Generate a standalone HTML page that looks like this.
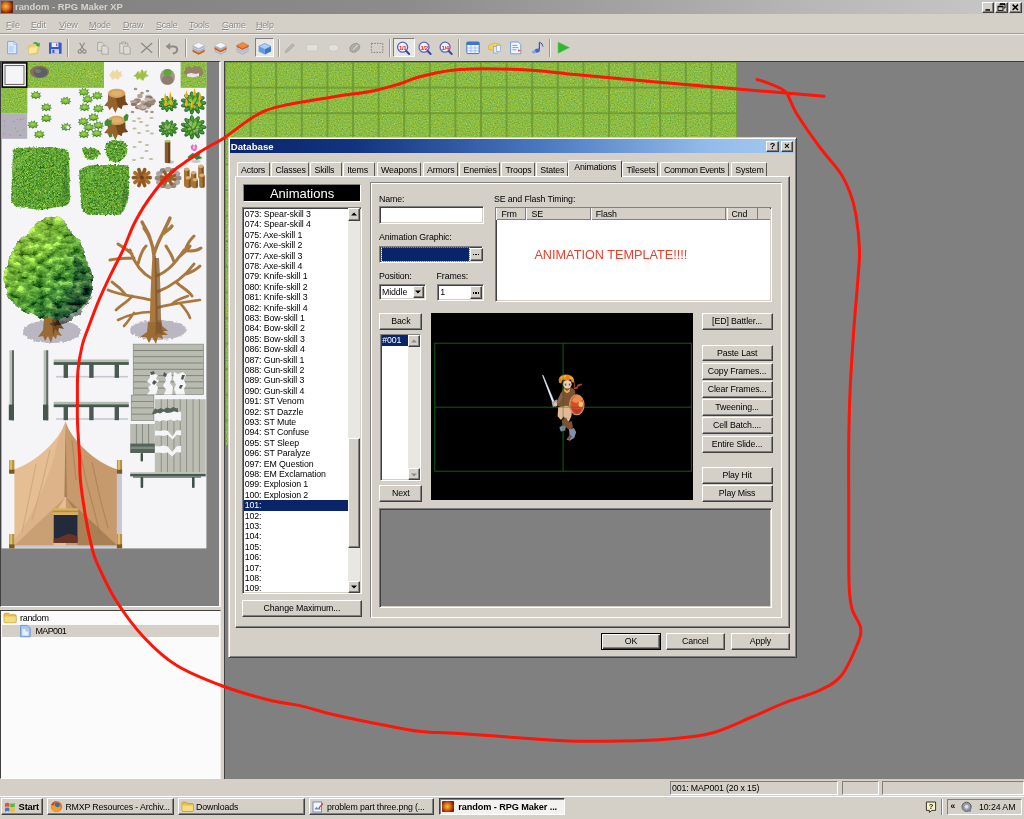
<!DOCTYPE html>
<html lang="en">
<head>
<meta charset="utf-8">
<title>random - RPG Maker XP</title>
<style>
*{box-sizing:border-box;margin:0;padding:0}
html,body{width:1024px;height:819px;overflow:hidden;background:#d4d0c8}
body{font-family:"Liberation Sans",sans-serif;font-size:9px;color:#000;position:relative;line-height:1}
.abs{position:absolute}
#screen{position:absolute;left:0;top:0;width:1024px;height:819px;overflow:hidden;background:#d4d0c8;filter:blur(0.45px)}
/* ---------- main window chrome ---------- */
#titlebar{left:0;top:0;width:1024px;height:14px;background:linear-gradient(90deg,#808080 0%,#8c8c8c 40%,#b8b8b8 80%,#c8c8c8 100%)}
#titlebar .ttl{left:15px;top:1px;font-weight:bold;font-size:9.4px;color:#d8d4cc;letter-spacing:0;white-space:nowrap;line-height:12px}
#appicon{left:1px;top:1px;width:12px;height:12px;background:radial-gradient(circle at 40% 45%,#f6c040 0,#e07018 35%,#7a2408 70%,#3a1404 100%);border-radius:1px}
.capbtn{top:1.6px;width:13px;height:11px;background:#d4d0c8;border:1px solid;border-color:#fff #404040 #404040 #fff;box-shadow:inset -1px -1px 0 #808080;font-size:8px;font-weight:bold;line-height:8px;text-align:center;color:#000}
#menubar{left:0;top:14px;width:1024px;height:19px;background:#d4d0c8}
#menubar span{position:absolute;top:5.6px;letter-spacing:-0.2px;color:#8c8a85;font-size:9px;white-space:nowrap;line-height:11px;text-shadow:0.5px 0.5px 0 #fff}
#menubar u{text-decoration-thickness:0.8px;text-underline-offset:1px}
#tbsep{left:0;top:33px;width:1024px;height:2px;border-top:1px solid #a29f97;border-bottom:1px solid #f0eee8}
#toolbar{left:0;top:35px;width:1024px;height:26px;background:#d4d0c8}
.tsep{top:39px;width:2px;height:18px;border-left:1px solid #9a978f;border-right:1px solid #f4f2ec}
/* ---------- generic 3d ---------- */
.sunk{border:1px solid;border-color:#808080 #fff #fff #808080;box-shadow:inset 1px 1px 0 #404040,inset -1px -1px 0 #d4d0c8}
.btn{background:#d4d0c8;border:1px solid;border-color:#fff #404040 #404040 #fff;box-shadow:inset -1px -1px 0 #808080;text-align:center;white-space:nowrap;font-size:9px;color:#000}
.lbl{white-space:nowrap;font-size:9px;line-height:11px;color:#000}
</style>
</head>
<body>
<div id="screen">

<!-- ================= TITLE BAR ================= -->
<div id="titlebar" class="abs">
  <div id="appicon" class="abs"></div>
  <div class="ttl abs">random - RPG Maker XP</div>
  <div class="capbtn abs" style="left:982.2px;width:12px"><svg width="10" height="9" viewBox="0 0 10 9" style="position:absolute;left:0;top:0"><rect x="2.400" y="6.200" width="4.600" height="1.500" fill="#000"/></svg></div>
  <div class="capbtn abs" style="left:994.6px;width:13px"><svg width="11" height="9" viewBox="0 0 11 9" style="position:absolute;left:0;top:0"><path d="M4 0.800h5v4.200h-1.400M4 0.800v1.600" fill="none" stroke="#000" stroke-width="0.900"/><rect x="4" y="0.600" width="5" height="1.300" fill="#000"/><rect x="2" y="3.200" width="5" height="4.200" fill="none" stroke="#000" stroke-width="0.900"/><rect x="2" y="3" width="5" height="1.300" fill="#000"/></svg></div>
  <div class="capbtn abs" style="left:1009.4px;width:13px"><svg width="11" height="9" viewBox="0 0 11 9" style="position:absolute;left:0;top:0"><path d="M2.600 1.600l5.400 5.400M8 1.600l-5.400 5.400" stroke="#000" stroke-width="1.500"/></svg></div>
</div>

<!-- ================= MENU BAR ================= -->
<div id="menubar" class="abs">
  <span style="left:6px"><u>F</u>ile</span>
  <span style="left:31px"><u>E</u>dit</span>
  <span style="left:59px"><u>V</u>iew</span>
  <span style="left:89px"><u>M</u>ode</span>
  <span style="left:123px"><u>D</u>raw</span>
  <span style="left:156px"><u>S</u>cale</span>
  <span style="left:189px"><u>T</u>ools</span>
  <span style="left:222px"><u>G</u>ame</span>
  <span style="left:256px"><u>H</u>elp</span>
</div>
<div id="tbsep" class="abs"></div>
<div id="toolbar" class="abs"></div>

<!--TOOLBAR-ICONS-START-->
<!-- ================= TOOLBAR ICONS ================= -->
<div class="tsep abs" style="left:67.3px"></div>
<div class="tsep abs" style="left:158.4px"></div>
<div class="tsep abs" style="left:184.5px"></div>
<div class="tsep abs" style="left:278.0px"></div>
<div class="tsep abs" style="left:388.9px"></div>
<div class="tsep abs" style="left:458.3px"></div>
<div class="tsep abs" style="left:549.1px"></div>
<div class="abs" style="left:254.9px;top:37.6px;width:19.4px;height:19.6px;background:#e9e7e2;border:1px solid;border-color:#808080 #fff #fff #808080"></div>
<div class="abs" style="left:392.8px;top:37.6px;width:22px;height:19.6px;background:#e9e7e2;border:1px solid;border-color:#808080 #fff #fff #808080"></div>
<svg class="abs" style="left:0;top:35px" width="600" height="26" viewBox="0 35 600 26">
<path d="M7.600 41.400h6.200l3 3v9.400h-9.200z" fill="#dbe8fa" stroke="#7aa0dc" stroke-width="0.9"/><path d="M9 46h4.600v6h-4.600z" fill="#b4d0f4" opacity="0.7"/><path d="M13.800 41.400v3h3z" fill="#fff" stroke="#7aa0dc" stroke-width="0.6"/>
<path d="M28 46.400l7.600-2 3.400 1.600-1.600 7.200-8 1.400z" fill="#f2d86a" stroke="#d8b03c" stroke-width="0.6"/><path d="M28.600 48.600l8.600-1.800-1 5.800-7 1.200z" fill="#f8e8a0"/><path d="M32.600 43.200q3.400-2.600 6 0.400l1.200-1 -0.200 4-3.800-0.600 1.200-1q-1.800-1.800-4.400-1.800z" fill="#34a838"/>
<path d="M49 42.600h11.600l1 1v10.200h-12.600z" fill="#3c58c0"/><rect x="51.600" y="42.600" width="6.800" height="4.400" fill="#e8ecf8"/><rect x="51" y="49.200" width="8" height="4.600" fill="#c8d0ec"/><rect x="52.400" y="50" width="2" height="3" fill="#3c58c0"/><rect x="56" y="43.400" width="1.400" height="2.800" fill="#8a6ad0"/>
<g stroke="#8a8884" fill="none" stroke-width="1.100"><path d="M79.600 42.800l4.600 7.400M84.600 42.800l-4.600 7.400"/><circle cx="79.800" cy="51.400" r="1.700"/><circle cx="84.400" cy="51.400" r="1.700"/></g>
<g fill="#dcdad4" stroke="#a09e98" stroke-width="0.8"><path d="M97.600 42.400h4.400l2 2v6.400h-6.400z"/><path d="M101.800 45.800h4.400l2 2v6.400h-6.400z"/></g>
<g fill="#dcdad4" stroke="#a09e98" stroke-width="0.8"><rect x="119.800" y="43.200" width="8" height="10"/><rect x="122" y="42" width="3.600" height="2"/><path d="M123.600 46.200h4.600l2 2v6h-6.600z"/></g>
<path d="M141.200 43l11 9.800M152.200 43l-11 9.800" stroke="#8a8884" stroke-width="1.200" fill="none"/>
<path d="M168.400 46.400h5.600q3.400 0.400 3.200 3.400-0.400 3-4.400 3.800" fill="none" stroke="#8e8c88" stroke-width="2"/><path d="M165.600 46.400l4.600-3.600v7.200z" fill="#8e8c88"/>
<path d="M192.6 50.2l6-3 6 3-6 3z" fill="#f08c3c" stroke="#c85c1c" stroke-width="0.5"/><path d="M192.6 50.2v1.600l6 3 6-3v-1.600l-6 3z" fill="#c85c1c"/>
<path d="M192.6 47.8l6-3 6 3-6 3z" fill="#f4f6fa" stroke="#a8b4c8" stroke-width="0.5"/><path d="M192.6 47.8v1.600l6 3 6-3v-1.600l-6 3z" fill="#a8b4c8"/>
<path d="M192.6 45.4l6-3 6 3-6 3z" fill="#f4f6fa" stroke="#a8b4c8" stroke-width="0.5"/><path d="M192.6 45.4v1.600l6 3 6-3v-1.600l-6 3z" fill="#a8b4c8"/>
<path d="M214.6 50.2l6-3 6 3-6 3z" fill="#f4f6fa" stroke="#a8b4c8" stroke-width="0.5"/><path d="M214.6 50.2v1.600l6 3 6-3v-1.600l-6 3z" fill="#a8b4c8"/>
<path d="M214.6 47.8l6-3 6 3-6 3z" fill="#f08c3c" stroke="#c85c1c" stroke-width="0.5"/><path d="M214.6 47.8v1.600l6 3 6-3v-1.600l-6 3z" fill="#c85c1c"/>
<path d="M214.6 45.4l6-3 6 3-6 3z" fill="#f4f6fa" stroke="#a8b4c8" stroke-width="0.5"/><path d="M214.6 45.4v1.600l6 3 6-3v-1.600l-6 3z" fill="#a8b4c8"/>
<path d="M236.6 50.2l6-3 6 3-6 3z" fill="#f4f6fa" stroke="#a8b4c8" stroke-width="0.5"/><path d="M236.6 50.2v1.600l6 3 6-3v-1.600l-6 3z" fill="#a8b4c8"/>
<path d="M236.6 47.8l6-3 6 3-6 3z" fill="#f4f6fa" stroke="#a8b4c8" stroke-width="0.5"/><path d="M236.6 47.8v1.600l6 3 6-3v-1.600l-6 3z" fill="#a8b4c8"/>
<path d="M236.6 45.4l6-3 6 3-6 3z" fill="#f08c3c" stroke="#c85c1c" stroke-width="0.5"/><path d="M236.6 45.4v1.600l6 3 6-3v-1.600l-6 3z" fill="#c85c1c"/>
<path d="M258.600 46.400l6.200-3 6.200 3-6.200 3z" fill="#a8d0f8" stroke="#3c7ccc" stroke-width="0.5"/><path d="M258.600 46.400v5.200l6.200 3v-5.200z" fill="#5c9ce4"/><path d="M271 46.400v5.200l-6.200 3v-5.200z" fill="#3c78c8"/>
<path d="M285 52.800l1-2.800 6.600-6.400 1.800 1.800-6.600 6.400z" fill="#b8b6b0" stroke="#9a9892" stroke-width="0.5"/>
<rect x="306.600" y="44.600" width="11" height="6.400" rx="1" fill="#e2e0da" stroke="#c2c0ba" stroke-width="0.6"/>
<ellipse cx="333.400" cy="47.800" rx="5.200" ry="3.400" fill="#e2e0da" stroke="#c2c0ba" stroke-width="0.6"/>
<path d="M350 50.800q-1.400-4 2.600-6.600 3.600-2.200 6.400 0.200 2 2.400-0.400 5.400-3 3.400-6.400 2.400z" fill="#aeaca6" stroke="#8a8882" stroke-width="0.6"/><path d="M353 49.800l5-5" stroke="#e8e6e0" stroke-width="1"/>
<rect x="371.400" y="43.400" width="11.400" height="9" fill="none" stroke="#7a7872" stroke-width="0.9" stroke-dasharray="1.600 1.200"/>
<circle cx="402.6" cy="47.2" r="5" fill="#f2f4fc" stroke="#5a64b8" stroke-width="1.300"/><path d="M406.2 51l3 3" stroke="#3c48a0" stroke-width="2" stroke-linecap="round"/>
<text x="402.6" y="49.600" font-family="Liberation Sans, sans-serif" font-size="6" font-weight="bold" fill="#d82828" text-anchor="middle" letter-spacing="-0.400">1/1</text>
<circle cx="424.0" cy="47.2" r="5" fill="#f2f4fc" stroke="#5a64b8" stroke-width="1.300"/><path d="M427.6 51l3 3" stroke="#3c48a0" stroke-width="2" stroke-linecap="round"/>
<text x="424.0" y="49.600" font-family="Liberation Sans, sans-serif" font-size="6" font-weight="bold" fill="#d82828" text-anchor="middle" letter-spacing="-0.400">1/2</text>
<circle cx="445.1" cy="47.2" r="5" fill="#f2f4fc" stroke="#5a64b8" stroke-width="1.300"/><path d="M448.7 51l3 3" stroke="#3c48a0" stroke-width="2" stroke-linecap="round"/>
<text x="445.1" y="49.600" font-family="Liberation Sans, sans-serif" font-size="6" font-weight="bold" fill="#d82828" text-anchor="middle" letter-spacing="-0.400">1/4</text>
<rect x="466.800" y="42" width="12.400" height="11.600" rx="1" fill="#f4f8fe" stroke="#3c74d0" stroke-width="1"/><rect x="466.800" y="42" width="12.400" height="3" fill="#3c74d0"/><path d="M471 45v8.600M475 45v8.600M466.800 48h12.400M466.800 50.800h12.400" stroke="#8ab0e8" stroke-width="0.700"/>
<path d="M488.400 45.600l5.600-2.800 6 1.600v3.600l-6 2.800-5.600-1.600z" fill="#f0d060" stroke="#c8a030" stroke-width="0.5"/><rect x="493.400" y="46.600" width="4.200" height="6.400" fill="#dce8f8" stroke="#7a9cd0" stroke-width="0.600"/><rect x="496.400" y="45.200" width="4.200" height="6.400" fill="#eef4fc" stroke="#7a9cd0" stroke-width="0.600"/>
<path d="M510.600 42h7.600l2.600 2.600v9.200h-10.200z" fill="#f4f8fe" stroke="#6a94d8" stroke-width="0.900"/><path d="M512.400 45.400h5M512.400 47.600h6M512.400 49.800h4" stroke="#5a84d0" stroke-width="0.800"/><path d="M518 49.200l3.400 1.200-3.400 1.400z" fill="#e06030"/>
<path d="M539.400 42.200v7.200" stroke="#3c50b8" stroke-width="1.200"/><ellipse cx="537.200" cy="50.600" rx="2.800" ry="2" fill="#4c64d0" transform="rotate(-20 537.200 50.600)"/><path d="M539.400 42.200q3.400 1 3.600 4.400" stroke="#3c50b8" stroke-width="1" fill="none"/><ellipse cx="534" cy="52" rx="2" ry="1.400" fill="#8a9ae8"/>
<path d="M558 42l11.600 5.600-11.600 5.800z" fill="#34b434" stroke="#6ad06a" stroke-width="0.600"/>
</svg>
<!--TOOLBAR-ICONS-END-->

<!--LEFT-START-->
<!-- ================= LEFT PANEL : TILESET PALETTE ================= -->
<div class="abs" style="left:0;top:61px;width:221px;height:546px;background:#808080;border-left:1.5px solid #404040;border-top:1px solid #404040;border-right:2px solid #f4f2ee;border-bottom:1px solid #fff"></div>
<div class="abs" style="left:221px;top:61px;width:3px;height:718px;background:#d4d0c8"></div>
<svg class="abs" style="left:0;top:62px" width="220" height="544" viewBox="0 62 220 544">
<defs>
<filter id="leafy" x="-5%" y="-5%" width="110%" height="110%" color-interpolation-filters="sRGB">
  <feTurbulence type="fractalNoise" baseFrequency="0.55" numOctaves="2" seed="11" result="t"/>
  <feColorMatrix in="t" type="matrix" values="1.0 0 0 0 -0.13  0.8 0.3 0 0 0.08  0.4 0 0 0 0.0  0 0 0 0 1" result="c"/>
  <feComposite in="c" in2="SourceGraphic" operator="in" result="m"/>
  <feDisplacementMap in="m" in2="t" scale="3" xChannelSelector="R" yChannelSelector="G"/>
</filter>
<filter id="rough" x="-10%" y="-10%" width="120%" height="120%">
  <feTurbulence type="fractalNoise" baseFrequency="0.35" numOctaves="2" seed="4" result="t"/>
  <feDisplacementMap in="SourceGraphic" in2="t" scale="3.5" xChannelSelector="R" yChannelSelector="G"/>
</filter>
<filter id="pnoise" x="0" y="0" width="100%" height="100%" color-interpolation-filters="sRGB">
  <feTurbulence type="fractalNoise" baseFrequency="0.75" numOctaves="1" seed="9"/>
  <feColorMatrix type="matrix" values="0.55 0.1 0 0 0.22  0.25 0.15 0 0 0.535  0 0 0.35 0 0.09  0 0 0 0 1" result="c"/>
  <feComposite in="c" in2="SourceGraphic" operator="in"/>
</filter>
<linearGradient id="crowng" x1="0.15" y1="0.05" x2="0.85" y2="0.95">
  <stop offset="0" stop-color="#9ccc50"/><stop offset="0.35" stop-color="#74b444"/><stop offset="0.7" stop-color="#428a40"/><stop offset="1" stop-color="#2a5848"/>
</linearGradient>
<filter id="crownf" x="-5%" y="-5%" width="110%" height="110%" color-interpolation-filters="sRGB">
  <feTurbulence type="fractalNoise" baseFrequency="0.11 0.16" numOctaves="3" seed="21" result="t"/>
  <feColorMatrix in="t" type="matrix" values="1.25 0 0 0 -0.125  1.35 0 0 0 -0.175  0.7 0 0 0 0.1  0 0 0 0 1" result="n"/>
  <feComposite in="SourceGraphic" in2="n" operator="arithmetic" k1="0" k2="1" k3="0.9" k4="-0.45" result="a"/>
  <feComposite in="a" in2="SourceGraphic" operator="in" result="b"/>
  <feDisplacementMap in="b" in2="t" scale="5" xChannelSelector="G" yChannelSelector="R"/>
</filter>
</defs>
<rect x="1.6" y="62.0" width="204.8" height="486.4" fill="#f5f5f8"/>
<rect x="27.2" y="62.0" width="76.8" height="25.6" fill="#86ba40"/>
<rect x="27.2" y="62.0" width="76.8" height="25.6" fill="#86ba40" filter="url(#pnoise)"/>
<rect x="180.8" y="62.0" width="25.6" height="25.6" fill="#86ba40"/>
<rect x="180.8" y="62.0" width="25.6" height="25.6" fill="#86ba40" filter="url(#pnoise)"/>
<rect x="1.6" y="87.6" width="25.6" height="25.6" fill="#86ba40"/>
<rect x="1.6" y="87.6" width="25.6" height="25.6" fill="#86ba40" filter="url(#pnoise)"/>
<rect x="1.6" y="113.2" width="25.6" height="25.6" fill="#b3b1bb"/>
<rect x="16.7" y="131.0" width="1" height="1" fill="#e060b0"/>
<rect x="20.3" y="135.0" width="1" height="1" fill="#e060b0"/>
<rect x="19.1" y="134.6" width="1" height="1" fill="#e060b0"/>
<rect x="4.2" y="125.5" width="1" height="1" fill="#e060b0"/>
<rect x="23.4" y="129.2" width="1" height="1" fill="#e060b0"/>
<rect x="22.5" y="118.5" width="1" height="1" fill="#e060b0"/>
<rect x="13.5" y="121.1" width="1" height="1" fill="#e060b0"/>
<rect x="15.0" y="127.7" width="1" height="1" fill="#e060b0"/>
<rect x="3.9" y="120.5" width="1" height="1" fill="#e060b0"/>
<rect x="9.5" y="134.5" width="1" height="1" fill="#e060b0"/>
<rect x="19.7" y="119.4" width="1" height="1" fill="#e060b0"/>
<rect x="20.3" y="119.0" width="1" height="1" fill="#e060b0"/>
<rect x="16.6" y="118.7" width="1" height="1" fill="#e060b0"/>
<rect x="3.6" y="133.6" width="1" height="1" fill="#e060b0"/>
<rect x="2.3" y="62.9" width="24.4" height="24.2" fill="#f8f8fa" stroke="#000" stroke-width="1.6"/>
<rect x="5.0" y="65.6" width="19" height="18.8" fill="#f5f5f8" stroke="#555" stroke-width="0.9"/>
<ellipse cx="39.5" cy="72" rx="9.5" ry="6.2" fill="#8a6e58"/><ellipse cx="40.5" cy="72.5" rx="7" ry="5" fill="#5d5f66"/><ellipse cx="38" cy="71" rx="3" ry="2" fill="#767a80"/>
<rect x="89" y="73" width="1.6" height="1.4" fill="#d8c860" opacity="0.8"/>
<rect x="92" y="75" width="1.6" height="1.4" fill="#d8c860" opacity="0.8"/>
<rect x="86" y="75" width="1.6" height="1.4" fill="#d8c860" opacity="0.8"/>
<rect x="90" y="77" width="1.6" height="1.4" fill="#d8c860" opacity="0.8"/>
<rect x="94" y="72" width="1.6" height="1.4" fill="#d8c860" opacity="0.8"/>
<rect x="88" y="71" width="1.6" height="1.4" fill="#d8c860" opacity="0.8"/>
<rect x="95" y="76" width="1.6" height="1.4" fill="#d8c860" opacity="0.8"/>
<path d="M110 74l3-4 2 2 2-3 2 3 3-1-1 3 2 2-3 1-2 3-3-2-3 2-1-3-2-1z" fill="#ecd9a4"/>
<path d="M135 75l3-4 2 2 2-4 2 3 3-2-1 4 3 2-4 1-2 4-3-3-3 2-1-3-3-1z" fill="#9cc048"/><path d="M138 73l2-2 1 3zM143 71l2 0-1 3zM145 76l2 1-2 1zM140 78l1 2-2-1z" fill="#e6cf4a"/>
<ellipse cx="167.5" cy="77" rx="7.5" ry="8" fill="#a8988c"/><ellipse cx="167.5" cy="80" rx="6" ry="4.5" fill="#8e7c70"/><ellipse cx="167.5" cy="72.5" rx="4" ry="3.6" fill="#5fa636"/>
<path d="M183.5 73l3-6 3-1 2 2 3-2 3 1 2-1 3 3 1 5-3 2-6 1-7-1z" fill="#96806c"/><path d="M187 74l4-1 5 1 3-1 0 3-6 1.5-6-1z" fill="#ece4e4"/>
<g transform="translate(35.8 94.9) scale(1.04)"><path d="M-5.400 1.200L-3.600 0.200L-4.600-2.200L-2.200-1.600L-1.600-3.800L0-2.200L1.800-3.900L2.400-1.600L4.800-2.400L3.800 0L5.600 1.200L3.600 1.800L4 3.800L1.600 2.800L0 4.200L-1.600 2.800L-4 3.800L-3.400 1.800Z" fill="#3f7f2a"/><path d="M-4.600 0.600L-3 -0.200L-3.800-2L-2-1.200L-1.400-3.200L0-1.800L1.600-3.200L2-1.200L4-2L3.200-0.200L4.800 0.600L3 1.200L3.200 2.600L1.400 1.800L0 3L-1.400 1.800L-3.200 2.600L-3 1.200Z" fill="#7fbd3c"/><path d="M-2 -0.600L0 -1.400L2-0.600L1.200 0.800L-1.200 0.800Z" fill="#a4cf4a"/></g>
<g transform="translate(46.2 107.0) scale(1.04)"><path d="M-5.400 1.200L-3.600 0.200L-4.600-2.200L-2.200-1.600L-1.600-3.800L0-2.200L1.800-3.900L2.400-1.600L4.800-2.400L3.800 0L5.600 1.200L3.600 1.800L4 3.800L1.600 2.800L0 4.200L-1.600 2.800L-4 3.800L-3.400 1.800Z" fill="#3f7f2a"/><path d="M-4.600 0.600L-3 -0.200L-3.800-2L-2-1.200L-1.400-3.200L0-1.800L1.600-3.200L2-1.200L4-2L3.200-0.200L4.800 0.600L3 1.200L3.200 2.600L1.400 1.800L0 3L-1.400 1.800L-3.200 2.600L-3 1.200Z" fill="#7fbd3c"/><path d="M-2 -0.600L0 -1.400L2-0.600L1.200 0.800L-1.200 0.800Z" fill="#a4cf4a"/></g>
<g transform="translate(46.2 118.0) scale(1.04)"><path d="M-5.400 1.200L-3.600 0.200L-4.600-2.200L-2.200-1.600L-1.600-3.800L0-2.200L1.800-3.900L2.400-1.600L4.800-2.400L3.800 0L5.600 1.200L3.600 1.800L4 3.800L1.600 2.800L0 4.200L-1.600 2.800L-4 3.800L-3.400 1.800Z" fill="#3f7f2a"/><path d="M-4.600 0.600L-3 -0.200L-3.800-2L-2-1.200L-1.400-3.200L0-1.800L1.600-3.200L2-1.200L4-2L3.200-0.200L4.800 0.600L3 1.200L3.200 2.600L1.400 1.800L0 3L-1.400 1.800L-3.200 2.600L-3 1.200Z" fill="#7fbd3c"/><path d="M-2 -0.600L0 -1.400L2-0.600L1.200 0.800L-1.200 0.800Z" fill="#a4cf4a"/></g>
<g transform="translate(32.8 124.4) scale(1.04)"><path d="M-5.400 1.200L-3.600 0.200L-4.600-2.200L-2.200-1.600L-1.600-3.800L0-2.200L1.800-3.900L2.400-1.600L4.800-2.400L3.800 0L5.600 1.200L3.600 1.800L4 3.800L1.600 2.800L0 4.200L-1.600 2.800L-4 3.800L-3.400 1.800Z" fill="#3f7f2a"/><path d="M-4.600 0.600L-3 -0.200L-3.800-2L-2-1.200L-1.400-3.200L0-1.800L1.600-3.200L2-1.200L4-2L3.200-0.200L4.800 0.600L3 1.200L3.200 2.600L1.400 1.800L0 3L-1.400 1.800L-3.200 2.600L-3 1.200Z" fill="#7fbd3c"/><path d="M-2 -0.600L0 -1.400L2-0.600L1.200 0.800L-1.200 0.800Z" fill="#a4cf4a"/></g>
<g transform="translate(39.2 134.1) scale(1.04)"><path d="M-5.400 1.200L-3.600 0.200L-4.600-2.200L-2.200-1.600L-1.600-3.800L0-2.200L1.800-3.900L2.400-1.600L4.800-2.400L3.800 0L5.600 1.200L3.600 1.800L4 3.800L1.600 2.800L0 4.200L-1.600 2.800L-4 3.800L-3.400 1.800Z" fill="#3f7f2a"/><path d="M-4.600 0.600L-3 -0.200L-3.800-2L-2-1.200L-1.400-3.200L0-1.800L1.600-3.200L2-1.200L4-2L3.200-0.200L4.800 0.600L3 1.200L3.200 2.600L1.400 1.800L0 3L-1.400 1.800L-3.200 2.600L-3 1.200Z" fill="#7fbd3c"/><path d="M-2 -0.600L0 -1.400L2-0.600L1.200 0.800L-1.200 0.800Z" fill="#a4cf4a"/></g>
<g transform="translate(65.5 100.6) scale(1.04)"><path d="M-5.400 1.200L-3.600 0.200L-4.600-2.200L-2.200-1.600L-1.600-3.800L0-2.200L1.800-3.900L2.400-1.600L4.800-2.400L3.800 0L5.600 1.200L3.600 1.800L4 3.800L1.600 2.800L0 4.200L-1.600 2.800L-4 3.800L-3.400 1.800Z" fill="#3f7f2a"/><path d="M-4.600 0.600L-3 -0.200L-3.800-2L-2-1.200L-1.400-3.200L0-1.800L1.600-3.200L2-1.200L4-2L3.200-0.200L4.800 0.600L3 1.200L3.200 2.600L1.400 1.800L0 3L-1.400 1.800L-3.200 2.600L-3 1.200Z" fill="#7fbd3c"/><path d="M-2 -0.600L0 -1.400L2-0.600L1.200 0.800L-1.200 0.800Z" fill="#a4cf4a"/></g>
<g transform="translate(83.8 91.7) scale(1.04)"><path d="M-5.400 1.200L-3.600 0.200L-4.600-2.200L-2.200-1.600L-1.600-3.800L0-2.200L1.800-3.900L2.400-1.600L4.800-2.400L3.800 0L5.600 1.200L3.600 1.800L4 3.800L1.600 2.800L0 4.200L-1.600 2.800L-4 3.800L-3.400 1.800Z" fill="#3f7f2a"/><path d="M-4.600 0.600L-3 -0.200L-3.800-2L-2-1.200L-1.400-3.200L0-1.800L1.600-3.200L2-1.200L4-2L3.200-0.200L4.800 0.600L3 1.200L3.200 2.600L1.400 1.800L0 3L-1.400 1.800L-3.200 2.600L-3 1.200Z" fill="#7fbd3c"/><path d="M-2 -0.600L0 -1.400L2-0.600L1.200 0.800L-1.200 0.800Z" fill="#a4cf4a"/></g>
<g transform="translate(97.2 95.4) scale(1.04)"><path d="M-5.400 1.200L-3.600 0.200L-4.600-2.200L-2.200-1.600L-1.600-3.800L0-2.200L1.800-3.900L2.400-1.600L4.800-2.400L3.800 0L5.600 1.200L3.600 1.800L4 3.800L1.600 2.800L0 4.200L-1.600 2.800L-4 3.800L-3.400 1.800Z" fill="#3f7f2a"/><path d="M-4.600 0.600L-3 -0.200L-3.800-2L-2-1.200L-1.400-3.200L0-1.800L1.600-3.200L2-1.200L4-2L3.200-0.200L4.800 0.600L3 1.200L3.200 2.600L1.400 1.800L0 3L-1.400 1.800L-3.200 2.600L-3 1.200Z" fill="#7fbd3c"/><path d="M-2 -0.600L0 -1.400L2-0.600L1.200 0.800L-1.200 0.800Z" fill="#a4cf4a"/></g>
<g transform="translate(87.5 98.9) scale(1.04)"><path d="M-5.400 1.200L-3.600 0.200L-4.600-2.200L-2.200-1.600L-1.600-3.800L0-2.200L1.800-3.900L2.400-1.600L4.800-2.400L3.800 0L5.600 1.200L3.600 1.800L4 3.800L1.600 2.800L0 4.200L-1.600 2.800L-4 3.800L-3.400 1.800Z" fill="#3f7f2a"/><path d="M-4.600 0.600L-3 -0.200L-3.800-2L-2-1.200L-1.400-3.200L0-1.800L1.600-3.200L2-1.200L4-2L3.200-0.200L4.800 0.600L3 1.200L3.200 2.600L1.400 1.800L0 3L-1.400 1.800L-3.200 2.600L-3 1.200Z" fill="#7fbd3c"/><path d="M-2 -0.600L0 -1.400L2-0.600L1.200 0.800L-1.200 0.800Z" fill="#a4cf4a"/></g>
<g transform="translate(84.5 107.0) scale(1.04)"><path d="M-5.400 1.200L-3.600 0.200L-4.600-2.200L-2.200-1.600L-1.600-3.800L0-2.200L1.800-3.900L2.400-1.600L4.800-2.400L3.800 0L5.600 1.200L3.600 1.800L4 3.800L1.600 2.800L0 4.200L-1.600 2.800L-4 3.800L-3.400 1.800Z" fill="#3f7f2a"/><path d="M-4.600 0.600L-3 -0.200L-3.800-2L-2-1.200L-1.400-3.200L0-1.800L1.600-3.200L2-1.200L4-2L3.200-0.200L4.800 0.600L3 1.200L3.200 2.600L1.400 1.800L0 3L-1.400 1.800L-3.200 2.600L-3 1.200Z" fill="#7fbd3c"/><path d="M-2 -0.600L0 -1.400L2-0.600L1.200 0.800L-1.200 0.800Z" fill="#a4cf4a"/></g>
<g transform="translate(98.3 108.3) scale(1.04)"><path d="M-5.400 1.200L-3.600 0.200L-4.600-2.200L-2.200-1.600L-1.600-3.800L0-2.200L1.800-3.900L2.400-1.600L4.800-2.400L3.800 0L5.600 1.200L3.600 1.800L4 3.800L1.600 2.800L0 4.200L-1.600 2.800L-4 3.800L-3.400 1.800Z" fill="#3f7f2a"/><path d="M-4.600 0.600L-3 -0.200L-3.800-2L-2-1.200L-1.400-3.200L0-1.800L1.600-3.200L2-1.200L4-2L3.200-0.200L4.800 0.600L3 1.200L3.200 2.600L1.400 1.800L0 3L-1.400 1.800L-3.200 2.600L-3 1.200Z" fill="#7fbd3c"/><path d="M-2 -0.600L0 -1.400L2-0.600L1.200 0.800L-1.200 0.800Z" fill="#a4cf4a"/></g>
<g transform="translate(93.4 117.0) scale(1.04)"><path d="M-5.400 1.200L-3.600 0.200L-4.600-2.200L-2.200-1.600L-1.600-3.800L0-2.200L1.800-3.900L2.400-1.600L4.800-2.400L3.800 0L5.600 1.200L3.600 1.800L4 3.800L1.600 2.800L0 4.200L-1.600 2.800L-4 3.800L-3.400 1.800Z" fill="#3f7f2a"/><path d="M-4.600 0.600L-3 -0.200L-3.800-2L-2-1.200L-1.400-3.200L0-1.800L1.600-3.200L2-1.200L4-2L3.200-0.200L4.800 0.600L3 1.200L3.200 2.600L1.400 1.800L0 3L-1.400 1.800L-3.200 2.600L-3 1.200Z" fill="#7fbd3c"/><path d="M-2 -0.600L0 -1.400L2-0.600L1.200 0.800L-1.200 0.800Z" fill="#a4cf4a"/></g>
<g transform="translate(83.2 121.2) scale(1.04)"><path d="M-5.400 1.200L-3.600 0.200L-4.600-2.200L-2.200-1.600L-1.600-3.800L0-2.200L1.800-3.900L2.400-1.600L4.800-2.400L3.800 0L5.600 1.200L3.600 1.800L4 3.800L1.600 2.800L0 4.200L-1.600 2.800L-4 3.800L-3.400 1.800Z" fill="#3f7f2a"/><path d="M-4.600 0.600L-3 -0.200L-3.800-2L-2-1.200L-1.400-3.200L0-1.800L1.600-3.200L2-1.200L4-2L3.200-0.200L4.800 0.600L3 1.200L3.200 2.600L1.400 1.800L0 3L-1.400 1.800L-3.200 2.600L-3 1.200Z" fill="#7fbd3c"/><path d="M-2 -0.600L0 -1.400L2-0.600L1.200 0.800L-1.200 0.800Z" fill="#a4cf4a"/></g>
<g transform="translate(98.3 125.0) scale(1.04)"><path d="M-5.400 1.200L-3.600 0.200L-4.600-2.200L-2.200-1.600L-1.600-3.800L0-2.200L1.800-3.900L2.400-1.600L4.800-2.400L3.800 0L5.600 1.200L3.600 1.800L4 3.800L1.600 2.800L0 4.200L-1.600 2.800L-4 3.800L-3.400 1.800Z" fill="#3f7f2a"/><path d="M-4.600 0.600L-3 -0.200L-3.800-2L-2-1.200L-1.400-3.200L0-1.800L1.600-3.200L2-1.200L4-2L3.200-0.200L4.800 0.600L3 1.200L3.200 2.600L1.400 1.800L0 3L-1.400 1.800L-3.200 2.600L-3 1.200Z" fill="#7fbd3c"/><path d="M-2 -0.600L0 -1.400L2-0.600L1.200 0.800L-1.200 0.800Z" fill="#a4cf4a"/></g>
<g transform="translate(88.6 127.0) scale(1.04)"><path d="M-5.400 1.200L-3.600 0.200L-4.600-2.200L-2.200-1.600L-1.600-3.800L0-2.200L1.800-3.900L2.400-1.600L4.800-2.400L3.800 0L5.600 1.200L3.600 1.800L4 3.800L1.600 2.800L0 4.200L-1.600 2.800L-4 3.800L-3.400 1.800Z" fill="#3f7f2a"/><path d="M-4.600 0.600L-3 -0.200L-3.800-2L-2-1.200L-1.400-3.200L0-1.800L1.600-3.200L2-1.200L4-2L3.200-0.200L4.800 0.600L3 1.200L3.200 2.600L1.400 1.800L0 3L-1.400 1.800L-3.200 2.600L-3 1.200Z" fill="#7fbd3c"/><path d="M-2 -0.600L0 -1.400L2-0.600L1.200 0.800L-1.200 0.800Z" fill="#a4cf4a"/></g>
<g transform="translate(83.8 134.0) scale(1.04)"><path d="M-5.400 1.200L-3.600 0.200L-4.600-2.200L-2.200-1.600L-1.600-3.800L0-2.200L1.800-3.900L2.400-1.600L4.800-2.400L3.800 0L5.600 1.200L3.600 1.800L4 3.800L1.600 2.800L0 4.200L-1.600 2.800L-4 3.800L-3.400 1.800Z" fill="#3f7f2a"/><path d="M-4.600 0.600L-3 -0.200L-3.800-2L-2-1.200L-1.400-3.200L0-1.800L1.600-3.200L2-1.200L4-2L3.200-0.200L4.800 0.600L3 1.200L3.200 2.600L1.400 1.800L0 3L-1.400 1.800L-3.200 2.600L-3 1.200Z" fill="#7fbd3c"/><path d="M-2 -0.600L0 -1.400L2-0.600L1.200 0.800L-1.200 0.800Z" fill="#a4cf4a"/></g>
<g transform="translate(96.7 133.0) scale(1.04)"><path d="M-5.400 1.200L-3.600 0.200L-4.600-2.200L-2.200-1.600L-1.600-3.800L0-2.200L1.800-3.900L2.400-1.600L4.800-2.400L3.800 0L5.600 1.200L3.600 1.800L4 3.800L1.600 2.800L0 4.200L-1.600 2.800L-4 3.800L-3.400 1.800Z" fill="#3f7f2a"/><path d="M-4.600 0.600L-3 -0.200L-3.800-2L-2-1.200L-1.400-3.200L0-1.800L1.600-3.200L2-1.200L4-2L3.200-0.200L4.800 0.600L3 1.200L3.200 2.600L1.400 1.800L0 3L-1.400 1.800L-3.200 2.600L-3 1.200Z" fill="#7fbd3c"/><path d="M-2 -0.600L0 -1.400L2-0.600L1.200 0.800L-1.200 0.800Z" fill="#a4cf4a"/></g>
<g transform="translate(66.0 126.6) scale(1.03)"><path d="M-5.400 1.200L-3.600 0.200L-4.600-2.200L-2.200-1.600L-1.600-3.800L0-2.200L1.800-3.900L2.400-1.600L4.800-2.400L3.800 0L5.600 1.200L3.600 1.800L4 3.800L1.600 2.800L0 4.200L-1.600 2.800L-4 3.800L-3.400 1.800Z" fill="#3f7f2a"/><path d="M-4.600 0.600L-3 -0.200L-3.800-2L-2-1.200L-1.400-3.200L0-1.800L1.600-3.200L2-1.200L4-2L3.200-0.200L4.800 0.600L3 1.200L3.200 2.600L1.400 1.800L0 3L-1.400 1.800L-3.200 2.600L-3 1.200Z" fill="#7fbd3c"/><path d="M-2 -0.600L0 -1.400L2-0.600L1.200 0.800L-1.200 0.800Z" fill="#a4cf4a"/></g>
<circle cx="68" cy="127.6" r="1.5" fill="#fff"/><circle cx="63.6" cy="123.4" r="1.1" fill="#dfe8ff"/><circle cx="64.8" cy="128" r="0.8" fill="#5a7ad8"/>
<path d="M108.1 93.3L107.8 101.3L104.19999999999999 105.8L107.6 106.3L109.6 110.3L112.19999999999999 106.7L115.39999999999999 113.1L118.0 107.1L121.6 108.89999999999999L122.6 105.3L128.2 104.89999999999999L125.39999999999999 101.3L125.1 93.3Z" fill="#94642c"/>
<path d="M115.6 97.3L125.1 95.3L125.39999999999999 101.3L128.2 104.89999999999999L122.6 105.3L121.6 108.89999999999999L118.0 107.1Z" fill="#74481f"/>
<ellipse cx="116.6" cy="93.3" rx="8.7" ry="4.6" fill="#d6a45c"/><ellipse cx="116.6" cy="93.3" rx="5.4" ry="2.6" fill="#e0b26a"/>
<path d="M108.1 120.4L107.8 128.4L104.19999999999999 132.9L107.6 133.4L109.6 137.4L112.19999999999999 133.8L115.39999999999999 140.20000000000002L118.0 134.20000000000002L121.6 136.0L122.6 132.4L128.2 132.0L125.39999999999999 128.4L125.1 120.4Z" fill="#94642c"/>
<path d="M115.6 124.4L125.1 122.4L125.39999999999999 128.4L128.2 132.0L122.6 132.4L121.6 136.0L118.0 134.20000000000002Z" fill="#74481f"/>
<ellipse cx="116.6" cy="120.4" rx="8.7" ry="4.6" fill="#d6a45c"/><ellipse cx="116.6" cy="120.4" rx="5.4" ry="2.6" fill="#e0b26a"/>
<path d="M104.6 121.4l3-3 2 2 2-1 0 4-3 3-4-1zM123.6 116.4l3-3 2 2-1 5-3 1zM108.6 134.4l3-1 1 3-3 1z" fill="#3f8a34"/>
<ellipse cx="153.3" cy="100.1" rx="2.1" ry="1.7" fill="#b4a494"/>
<ellipse cx="148.0" cy="107.5" rx="2.4" ry="1.5" fill="#c4b8ac"/>
<ellipse cx="151.6" cy="103.3" rx="3.0" ry="2.1" fill="#8a7868"/>
<ellipse cx="148.0" cy="98.3" rx="2.9" ry="1.7" fill="#c4b8ac"/>
<ellipse cx="143.3" cy="103.0" rx="2.6" ry="2.2" fill="#b4a494"/>
<ellipse cx="148.7" cy="99.6" rx="2.9" ry="1.5" fill="#9a8878"/>
<ellipse cx="148.8" cy="102.5" rx="2.8" ry="1.7" fill="#9a8878"/>
<ellipse cx="136.1" cy="101.6" rx="3.3" ry="2.0" fill="#8a7868"/>
<ellipse cx="150.9" cy="98.6" rx="2.6" ry="2.2" fill="#c4b8ac"/>
<ellipse cx="133.9" cy="104.3" rx="3.1" ry="1.8" fill="#8a7868"/>
<ellipse cx="136.8" cy="101.1" rx="2.8" ry="2.1" fill="#8a7868"/>
<ellipse cx="137.6" cy="107.3" rx="2.6" ry="2.0" fill="#8a7868"/>
<ellipse cx="137.4" cy="100.4" rx="3.5" ry="2.1" fill="#9a8878"/>
<ellipse cx="148.4" cy="96.3" rx="3.2" ry="1.8" fill="#c4b8ac"/>
<ellipse cx="140.5" cy="107.9" rx="2.5" ry="1.5" fill="#8a7868"/>
<ellipse cx="133.4" cy="101.5" rx="3.3" ry="1.6" fill="#b4a494"/>
<ellipse cx="152.8" cy="102.3" rx="2.1" ry="2.0" fill="#b4a494"/>
<ellipse cx="142.9" cy="104.9" rx="3.2" ry="1.4" fill="#b4a494"/>
<ellipse cx="142.6" cy="108.4" rx="2.7" ry="2.0" fill="#b4a494"/>
<ellipse cx="149.1" cy="102.8" rx="2.4" ry="1.3" fill="#9a8878"/>
<ellipse cx="145.1" cy="102.9" rx="3.2" ry="1.3" fill="#b4a494"/>
<ellipse cx="143.2" cy="108.4" rx="3.2" ry="1.8" fill="#9a8878"/>
<ellipse cx="151.1" cy="102.1" rx="2.2" ry="1.3" fill="#9a8878"/>
<ellipse cx="139.1" cy="106.5" rx="2.5" ry="1.8" fill="#b4a494"/>
<ellipse cx="140.9" cy="106.7" rx="3.4" ry="2.1" fill="#b4a494"/>
<ellipse cx="149.0" cy="97.5" rx="3.5" ry="1.4" fill="#8a7868"/>
<ellipse cx="139.9" cy="96.0" rx="2.7" ry="2.2" fill="#b4a494"/>
<ellipse cx="148.8" cy="105.7" rx="2.8" ry="1.6" fill="#8a7868"/>
<ellipse cx="147.4" cy="99.3" rx="3.0" ry="1.7" fill="#c4b8ac"/>
<ellipse cx="150.9" cy="102.6" rx="3.1" ry="1.6" fill="#9a8878"/>
<ellipse cx="146.0" cy="103.8" rx="3.0" ry="1.8" fill="#8a7868"/>
<ellipse cx="153.5" cy="101.3" rx="2.4" ry="1.7" fill="#9a8878"/>
<ellipse cx="143.5" cy="107.3" rx="2.4" ry="1.7" fill="#c4b8ac"/>
<ellipse cx="143.1" cy="102.0" rx="2.6" ry="1.5" fill="#b4a494"/>
<ellipse cx="135.5" cy="89" rx="1.8" ry="1.2" fill="#a89888"/>
<ellipse cx="147.5" cy="91" rx="1.8" ry="1.2" fill="#a89888"/>
<ellipse cx="132.5" cy="112" rx="1.8" ry="1.2" fill="#a89888"/>
<ellipse cx="146.5" cy="111.5" rx="1.8" ry="1.2" fill="#a89888"/>
<ellipse cx="152" cy="112" rx="1.8" ry="1.2" fill="#a89888"/>
<ellipse cx="142" cy="93" rx="1.8" ry="1.2" fill="#a89888"/>
<ellipse cx="139" cy="118.5" rx="2.2" ry="1" fill="#c4bc9c"/>
<ellipse cx="151.5" cy="118" rx="2.2" ry="1" fill="#c4bc9c"/>
<ellipse cx="134" cy="121" rx="2.2" ry="1" fill="#c4bc9c"/>
<ellipse cx="141" cy="122" rx="2.2" ry="1" fill="#c4bc9c"/>
<ellipse cx="147" cy="125.5" rx="2.2" ry="1" fill="#c4bc9c"/>
<ellipse cx="134.5" cy="128.5" rx="2.2" ry="1" fill="#c4bc9c"/>
<ellipse cx="147.5" cy="131" rx="2.2" ry="1" fill="#c4bc9c"/>
<ellipse cx="139" cy="133" rx="2.2" ry="1" fill="#c4bc9c"/>
<ellipse cx="152" cy="133.5" rx="2.2" ry="1" fill="#c4bc9c"/>
<ellipse cx="140" cy="142" rx="2.2" ry="1" fill="#c4bc9c"/>
<ellipse cx="147" cy="145" rx="2.2" ry="1" fill="#c4bc9c"/>
<ellipse cx="134.5" cy="147" rx="2.2" ry="1" fill="#c4bc9c"/>
<ellipse cx="146.5" cy="151" rx="2.2" ry="1" fill="#c4bc9c"/>
<ellipse cx="142" cy="158" rx="2.2" ry="1" fill="#c4bc9c"/>
<ellipse cx="134" cy="160" rx="2.2" ry="1" fill="#c4bc9c"/>
<ellipse cx="151" cy="159" rx="2.2" ry="1" fill="#c4bc9c"/>
<ellipse cx="174.0" cy="104.0" rx="3.9" ry="1.7" fill="#2c6a2e" transform="rotate(0 174.0 104.0)"/>
<ellipse cx="174.0" cy="103.5" rx="3.2" ry="1.2" fill="#4c9a34" transform="rotate(0 174.0 103.5)"/>
<ellipse cx="173.1" cy="106.2" rx="3.9" ry="1.7" fill="#2c6a2e" transform="rotate(24 173.1 106.2)"/>
<ellipse cx="173.1" cy="105.7" rx="3.2" ry="1.2" fill="#4c9a34" transform="rotate(24 173.1 105.7)"/>
<ellipse cx="170.6" cy="107.7" rx="3.9" ry="1.7" fill="#2c6a2e" transform="rotate(57 170.6 107.7)"/>
<ellipse cx="170.6" cy="107.2" rx="3.2" ry="1.2" fill="#4c9a34" transform="rotate(57 170.6 107.2)"/>
<ellipse cx="167.4" cy="108.1" rx="3.9" ry="1.7" fill="#2c6a2e" transform="rotate(102 167.4 108.1)"/>
<ellipse cx="167.4" cy="107.6" rx="3.2" ry="1.2" fill="#4c9a34" transform="rotate(102 167.4 107.6)"/>
<ellipse cx="164.4" cy="107.1" rx="3.9" ry="1.7" fill="#2c6a2e" transform="rotate(141 164.4 107.1)"/>
<ellipse cx="164.4" cy="106.6" rx="3.2" ry="1.2" fill="#4c9a34" transform="rotate(141 164.4 106.6)"/>
<ellipse cx="162.6" cy="105.2" rx="3.9" ry="1.7" fill="#2c6a2e" transform="rotate(168 162.6 105.2)"/>
<ellipse cx="162.6" cy="104.7" rx="3.2" ry="1.2" fill="#4c9a34" transform="rotate(168 162.6 104.7)"/>
<ellipse cx="162.6" cy="102.8" rx="3.9" ry="1.7" fill="#2c6a2e" transform="rotate(-168 162.6 102.8)"/>
<ellipse cx="162.6" cy="102.3" rx="3.2" ry="1.2" fill="#4c9a34" transform="rotate(-168 162.6 102.3)"/>
<ellipse cx="164.4" cy="100.9" rx="3.9" ry="1.7" fill="#2c6a2e" transform="rotate(-141 164.4 100.9)"/>
<ellipse cx="164.4" cy="100.4" rx="3.2" ry="1.2" fill="#4c9a34" transform="rotate(-141 164.4 100.4)"/>
<ellipse cx="167.4" cy="99.9" rx="3.9" ry="1.7" fill="#2c6a2e" transform="rotate(-102 167.4 99.9)"/>
<ellipse cx="167.4" cy="99.4" rx="3.2" ry="1.2" fill="#4c9a34" transform="rotate(-102 167.4 99.4)"/>
<ellipse cx="170.6" cy="100.3" rx="3.9" ry="1.7" fill="#2c6a2e" transform="rotate(-57 170.6 100.3)"/>
<ellipse cx="170.6" cy="99.8" rx="3.2" ry="1.2" fill="#4c9a34" transform="rotate(-57 170.6 99.8)"/>
<ellipse cx="173.1" cy="101.8" rx="3.9" ry="1.7" fill="#2c6a2e" transform="rotate(-24 173.1 101.8)"/>
<ellipse cx="173.1" cy="101.3" rx="3.2" ry="1.2" fill="#4c9a34" transform="rotate(-24 173.1 101.3)"/>
<ellipse cx="171.7" cy="104.7" rx="3.9" ry="1.7" fill="#2f7030" transform="rotate(12 171.7 104.7)"/>
<ellipse cx="171.7" cy="104.2" rx="3.2" ry="1.2" fill="#62ac38" transform="rotate(12 171.7 104.2)"/>
<ellipse cx="169.9" cy="106.2" rx="3.9" ry="1.7" fill="#2f7030" transform="rotate(53 169.9 106.2)"/>
<ellipse cx="169.9" cy="105.7" rx="3.2" ry="1.2" fill="#62ac38" transform="rotate(53 169.9 105.7)"/>
<ellipse cx="167.1" cy="106.4" rx="3.9" ry="1.7" fill="#2f7030" transform="rotate(114 167.1 106.4)"/>
<ellipse cx="167.1" cy="105.9" rx="3.2" ry="1.2" fill="#62ac38" transform="rotate(114 167.1 105.9)"/>
<ellipse cx="165.0" cy="105.2" rx="3.9" ry="1.7" fill="#2f7030" transform="rotate(160 165.0 105.2)"/>
<ellipse cx="165.0" cy="104.7" rx="3.2" ry="1.2" fill="#62ac38" transform="rotate(160 165.0 104.7)"/>
<ellipse cx="164.7" cy="103.3" rx="3.9" ry="1.7" fill="#2f7030" transform="rotate(-168 164.7 103.3)"/>
<ellipse cx="164.7" cy="102.8" rx="3.2" ry="1.2" fill="#62ac38" transform="rotate(-168 164.7 102.8)"/>
<ellipse cx="166.5" cy="101.8" rx="3.9" ry="1.7" fill="#2f7030" transform="rotate(-127 166.5 101.8)"/>
<ellipse cx="166.5" cy="101.3" rx="3.2" ry="1.2" fill="#62ac38" transform="rotate(-127 166.5 101.3)"/>
<ellipse cx="169.3" cy="101.6" rx="3.9" ry="1.7" fill="#2f7030" transform="rotate(-66 169.3 101.6)"/>
<ellipse cx="169.3" cy="101.1" rx="3.2" ry="1.2" fill="#62ac38" transform="rotate(-66 169.3 101.1)"/>
<ellipse cx="171.4" cy="102.8" rx="3.9" ry="1.7" fill="#2f7030" transform="rotate(-20 171.4 102.8)"/>
<ellipse cx="171.4" cy="102.3" rx="3.2" ry="1.2" fill="#62ac38" transform="rotate(-20 171.4 102.3)"/>
<ellipse cx="169.8" cy="104.1" rx="3.9" ry="1.7" fill="#3a7c30" transform="rotate(4 169.8 104.1)"/>
<ellipse cx="169.8" cy="103.6" rx="3.2" ry="1.2" fill="#86c444" transform="rotate(4 169.8 103.6)"/>
<ellipse cx="168.5" cy="105.1" rx="3.9" ry="1.7" fill="#3a7c30" transform="rotate(73 168.5 105.1)"/>
<ellipse cx="168.5" cy="104.6" rx="3.2" ry="1.2" fill="#86c444" transform="rotate(73 168.5 104.6)"/>
<ellipse cx="166.8" cy="104.6" rx="3.9" ry="1.7" fill="#3a7c30" transform="rotate(158 166.8 104.6)"/>
<ellipse cx="166.8" cy="104.1" rx="3.2" ry="1.2" fill="#86c444" transform="rotate(158 166.8 104.1)"/>
<ellipse cx="167.0" cy="103.2" rx="3.9" ry="1.7" fill="#3a7c30" transform="rotate(-148 167.0 103.2)"/>
<ellipse cx="167.0" cy="102.7" rx="3.2" ry="1.2" fill="#86c444" transform="rotate(-148 167.0 102.7)"/>
<ellipse cx="168.9" cy="103.0" rx="3.9" ry="1.7" fill="#3a7c30" transform="rotate(-58 168.9 103.0)"/>
<ellipse cx="168.9" cy="102.5" rx="3.2" ry="1.2" fill="#86c444" transform="rotate(-58 168.9 102.5)"/>
<path d="M163.6 99.5L165.2 92.5L166.9 99.5L165.2 101.1Z" fill="#f2c41e"/><path d="M165.2 93.5L166.7 99.5L165.2 100.9Z" fill="#e89a18"/>
<path d="M168.6 98.0L170.2 91.0L171.9 98.0L170.2 99.6Z" fill="#f2c41e"/><path d="M170.2 92.0L171.7 98.0L170.2 99.4Z" fill="#e89a18"/>
<path d="M169.6 104.0L171.2 98.5L172.9 104.0L171.2 105.6Z" fill="#f2c41e"/><path d="M171.2 99.5L172.7 104.0L171.2 105.4Z" fill="#e89a18"/>
<path d="M164.1 104.5L165.7 100.0L167.4 104.5L165.7 106.1Z" fill="#f2c41e"/><path d="M165.7 101.0L167.2 104.5L165.7 105.9Z" fill="#e89a18"/>
<ellipse cx="201.1" cy="103.0" rx="5.2" ry="2.2" fill="#2c6a2e" transform="rotate(0 201.1 103.0)"/>
<ellipse cx="201.1" cy="102.5" rx="4.3" ry="1.5" fill="#4c9a34" transform="rotate(0 201.1 102.5)"/>
<ellipse cx="199.9" cy="106.5" rx="5.2" ry="2.2" fill="#2c6a2e" transform="rotate(28 199.9 106.5)"/>
<ellipse cx="199.9" cy="106.0" rx="4.3" ry="1.5" fill="#4c9a34" transform="rotate(28 199.9 106.0)"/>
<ellipse cx="196.6" cy="108.9" rx="5.2" ry="2.2" fill="#2c6a2e" transform="rotate(61 196.6 108.9)"/>
<ellipse cx="196.6" cy="108.4" rx="4.3" ry="1.5" fill="#4c9a34" transform="rotate(61 196.6 108.4)"/>
<ellipse cx="192.3" cy="109.4" rx="5.2" ry="2.2" fill="#2c6a2e" transform="rotate(100 192.3 109.4)"/>
<ellipse cx="192.3" cy="108.9" rx="4.3" ry="1.5" fill="#4c9a34" transform="rotate(100 192.3 108.9)"/>
<ellipse cx="188.4" cy="107.9" rx="5.2" ry="2.2" fill="#2c6a2e" transform="rotate(136 188.4 107.9)"/>
<ellipse cx="188.4" cy="107.4" rx="4.3" ry="1.5" fill="#4c9a34" transform="rotate(136 188.4 107.4)"/>
<ellipse cx="186.0" cy="104.8" rx="5.2" ry="2.2" fill="#2c6a2e" transform="rotate(166 186.0 104.8)"/>
<ellipse cx="186.0" cy="104.3" rx="4.3" ry="1.5" fill="#4c9a34" transform="rotate(166 186.0 104.3)"/>
<ellipse cx="186.0" cy="101.2" rx="5.2" ry="2.2" fill="#2c6a2e" transform="rotate(-166 186.0 101.2)"/>
<ellipse cx="186.0" cy="100.7" rx="4.3" ry="1.5" fill="#4c9a34" transform="rotate(-166 186.0 100.7)"/>
<ellipse cx="188.4" cy="98.1" rx="5.2" ry="2.2" fill="#2c6a2e" transform="rotate(-136 188.4 98.1)"/>
<ellipse cx="188.4" cy="97.6" rx="4.3" ry="1.5" fill="#4c9a34" transform="rotate(-136 188.4 97.6)"/>
<ellipse cx="192.3" cy="96.6" rx="5.2" ry="2.2" fill="#2c6a2e" transform="rotate(-100 192.3 96.6)"/>
<ellipse cx="192.3" cy="96.1" rx="4.3" ry="1.5" fill="#4c9a34" transform="rotate(-100 192.3 96.1)"/>
<ellipse cx="196.6" cy="97.1" rx="5.2" ry="2.2" fill="#2c6a2e" transform="rotate(-61 196.6 97.1)"/>
<ellipse cx="196.6" cy="96.6" rx="4.3" ry="1.5" fill="#4c9a34" transform="rotate(-61 196.6 96.6)"/>
<ellipse cx="199.9" cy="99.5" rx="5.2" ry="2.2" fill="#2c6a2e" transform="rotate(-28 199.9 99.5)"/>
<ellipse cx="199.9" cy="99.0" rx="4.3" ry="1.5" fill="#4c9a34" transform="rotate(-28 199.9 99.0)"/>
<ellipse cx="198.0" cy="104.2" rx="5.2" ry="2.2" fill="#2f7030" transform="rotate(15 198.0 104.2)"/>
<ellipse cx="198.0" cy="103.7" rx="4.3" ry="1.5" fill="#62ac38" transform="rotate(15 198.0 103.7)"/>
<ellipse cx="195.6" cy="106.5" rx="5.2" ry="2.2" fill="#2f7030" transform="rotate(58 195.6 106.5)"/>
<ellipse cx="195.6" cy="106.0" rx="4.3" ry="1.5" fill="#62ac38" transform="rotate(58 195.6 106.0)"/>
<ellipse cx="192.0" cy="106.8" rx="5.2" ry="2.2" fill="#2f7030" transform="rotate(110 192.0 106.8)"/>
<ellipse cx="192.0" cy="106.3" rx="4.3" ry="1.5" fill="#62ac38" transform="rotate(110 192.0 106.3)"/>
<ellipse cx="189.2" cy="104.9" rx="5.2" ry="2.2" fill="#2f7030" transform="rotate(156 189.2 104.9)"/>
<ellipse cx="189.2" cy="104.4" rx="4.3" ry="1.5" fill="#62ac38" transform="rotate(156 189.2 104.4)"/>
<ellipse cx="188.8" cy="101.8" rx="5.2" ry="2.2" fill="#2f7030" transform="rotate(-165 188.8 101.8)"/>
<ellipse cx="188.8" cy="101.3" rx="4.3" ry="1.5" fill="#62ac38" transform="rotate(-165 188.8 101.3)"/>
<ellipse cx="191.2" cy="99.5" rx="5.2" ry="2.2" fill="#2f7030" transform="rotate(-122 191.2 99.5)"/>
<ellipse cx="191.2" cy="99.0" rx="4.3" ry="1.5" fill="#62ac38" transform="rotate(-122 191.2 99.0)"/>
<ellipse cx="194.8" cy="99.2" rx="5.2" ry="2.2" fill="#2f7030" transform="rotate(-70 194.8 99.2)"/>
<ellipse cx="194.8" cy="98.7" rx="4.3" ry="1.5" fill="#62ac38" transform="rotate(-70 194.8 98.7)"/>
<ellipse cx="197.6" cy="101.1" rx="5.2" ry="2.2" fill="#2f7030" transform="rotate(-24 197.6 101.1)"/>
<ellipse cx="197.6" cy="100.6" rx="4.3" ry="1.5" fill="#62ac38" transform="rotate(-24 197.6 100.6)"/>
<ellipse cx="195.5" cy="103.2" rx="5.2" ry="2.2" fill="#3a7c30" transform="rotate(5 195.5 103.2)"/>
<ellipse cx="195.5" cy="102.7" rx="4.3" ry="1.5" fill="#86c444" transform="rotate(5 195.5 102.7)"/>
<ellipse cx="193.9" cy="104.8" rx="5.2" ry="2.2" fill="#3a7c30" transform="rotate(75 193.9 104.8)"/>
<ellipse cx="193.9" cy="104.3" rx="4.3" ry="1.5" fill="#86c444" transform="rotate(75 193.9 104.3)"/>
<ellipse cx="191.5" cy="103.9" rx="5.2" ry="2.2" fill="#3a7c30" transform="rotate(154 191.5 103.9)"/>
<ellipse cx="191.5" cy="103.4" rx="4.3" ry="1.5" fill="#86c444" transform="rotate(154 191.5 103.4)"/>
<ellipse cx="191.8" cy="101.8" rx="5.2" ry="2.2" fill="#3a7c30" transform="rotate(-143 191.8 101.8)"/>
<ellipse cx="191.8" cy="101.3" rx="4.3" ry="1.5" fill="#86c444" transform="rotate(-143 191.8 101.3)"/>
<ellipse cx="194.3" cy="101.3" rx="5.2" ry="2.2" fill="#3a7c30" transform="rotate(-62 194.3 101.3)"/>
<ellipse cx="194.3" cy="100.8" rx="4.3" ry="1.5" fill="#86c444" transform="rotate(-62 194.3 100.8)"/>
<path d="M184.8 96.5L186.4 89.5L188.1 96.5L186.4 98.1Z" fill="#f2c41e"/><path d="M186.4 90.5L187.9 96.5L186.4 97.9Z" fill="#e89a18"/>
<path d="M192.8 94.5L194.4 87.5L196.1 94.5L194.4 96.1Z" fill="#f2c41e"/><path d="M194.4 88.5L195.9 94.5L194.4 95.9Z" fill="#e89a18"/>
<path d="M198.3 98.5L199.9 91.5L201.6 98.5L199.9 100.1Z" fill="#f2c41e"/><path d="M199.9 92.5L201.4 98.5L199.9 99.9Z" fill="#e89a18"/>
<path d="M184.8 105.0L186.4 98.0L188.1 105.0L186.4 106.6Z" fill="#f2c41e"/><path d="M186.4 99.0L187.9 105.0L186.4 106.4Z" fill="#e89a18"/>
<path d="M190.3 106.5L191.9 99.0L193.6 106.5L191.9 108.1Z" fill="#f2c41e"/><path d="M191.9 100.0L193.4 106.5L191.9 107.9Z" fill="#e89a18"/>
<path d="M197.8 105.5L199.4 99.0L201.1 105.5L199.4 107.1Z" fill="#f2c41e"/><path d="M199.4 100.0L200.9 105.5L199.4 106.9Z" fill="#e89a18"/>
<ellipse cx="174.0" cy="128.5" rx="3.9" ry="1.7" fill="#2c6a2e" transform="rotate(0 174.0 128.5)"/>
<ellipse cx="174.0" cy="128.0" rx="3.2" ry="1.2" fill="#4c9a34" transform="rotate(0 174.0 128.0)"/>
<ellipse cx="173.1" cy="131.2" rx="3.9" ry="1.7" fill="#2c6a2e" transform="rotate(29 173.1 131.2)"/>
<ellipse cx="173.1" cy="130.7" rx="3.2" ry="1.2" fill="#4c9a34" transform="rotate(29 173.1 130.7)"/>
<ellipse cx="170.6" cy="133.0" rx="3.9" ry="1.7" fill="#2c6a2e" transform="rotate(62 170.6 133.0)"/>
<ellipse cx="170.6" cy="132.5" rx="3.2" ry="1.2" fill="#4c9a34" transform="rotate(62 170.6 132.5)"/>
<ellipse cx="167.4" cy="133.4" rx="3.9" ry="1.7" fill="#2c6a2e" transform="rotate(100 167.4 133.4)"/>
<ellipse cx="167.4" cy="132.9" rx="3.2" ry="1.2" fill="#4c9a34" transform="rotate(100 167.4 132.9)"/>
<ellipse cx="164.4" cy="132.2" rx="3.9" ry="1.7" fill="#2c6a2e" transform="rotate(136 164.4 132.2)"/>
<ellipse cx="164.4" cy="131.7" rx="3.2" ry="1.2" fill="#4c9a34" transform="rotate(136 164.4 131.7)"/>
<ellipse cx="162.6" cy="129.9" rx="3.9" ry="1.7" fill="#2c6a2e" transform="rotate(166 162.6 129.9)"/>
<ellipse cx="162.6" cy="129.4" rx="3.2" ry="1.2" fill="#4c9a34" transform="rotate(166 162.6 129.4)"/>
<ellipse cx="162.6" cy="127.1" rx="3.9" ry="1.7" fill="#2c6a2e" transform="rotate(-166 162.6 127.1)"/>
<ellipse cx="162.6" cy="126.6" rx="3.2" ry="1.2" fill="#4c9a34" transform="rotate(-166 162.6 126.6)"/>
<ellipse cx="164.4" cy="124.8" rx="3.9" ry="1.7" fill="#2c6a2e" transform="rotate(-136 164.4 124.8)"/>
<ellipse cx="164.4" cy="124.3" rx="3.2" ry="1.2" fill="#4c9a34" transform="rotate(-136 164.4 124.3)"/>
<ellipse cx="167.4" cy="123.6" rx="3.9" ry="1.7" fill="#2c6a2e" transform="rotate(-100 167.4 123.6)"/>
<ellipse cx="167.4" cy="123.1" rx="3.2" ry="1.2" fill="#4c9a34" transform="rotate(-100 167.4 123.1)"/>
<ellipse cx="170.6" cy="124.0" rx="3.9" ry="1.7" fill="#2c6a2e" transform="rotate(-62 170.6 124.0)"/>
<ellipse cx="170.6" cy="123.5" rx="3.2" ry="1.2" fill="#4c9a34" transform="rotate(-62 170.6 123.5)"/>
<ellipse cx="173.1" cy="125.8" rx="3.9" ry="1.7" fill="#2c6a2e" transform="rotate(-29 173.1 125.8)"/>
<ellipse cx="173.1" cy="125.3" rx="3.2" ry="1.2" fill="#4c9a34" transform="rotate(-29 173.1 125.3)"/>
<ellipse cx="171.7" cy="129.4" rx="3.9" ry="1.7" fill="#2f7030" transform="rotate(15 171.7 129.4)"/>
<ellipse cx="171.7" cy="128.9" rx="3.2" ry="1.2" fill="#62ac38" transform="rotate(15 171.7 128.9)"/>
<ellipse cx="169.9" cy="131.2" rx="3.9" ry="1.7" fill="#2f7030" transform="rotate(58 169.9 131.2)"/>
<ellipse cx="169.9" cy="130.7" rx="3.2" ry="1.2" fill="#62ac38" transform="rotate(58 169.9 130.7)"/>
<ellipse cx="167.1" cy="131.4" rx="3.9" ry="1.7" fill="#2f7030" transform="rotate(110 167.1 131.4)"/>
<ellipse cx="167.1" cy="130.9" rx="3.2" ry="1.2" fill="#62ac38" transform="rotate(110 167.1 130.9)"/>
<ellipse cx="165.0" cy="129.9" rx="3.9" ry="1.7" fill="#2f7030" transform="rotate(156 165.0 129.9)"/>
<ellipse cx="165.0" cy="129.4" rx="3.2" ry="1.2" fill="#62ac38" transform="rotate(156 165.0 129.4)"/>
<ellipse cx="164.7" cy="127.6" rx="3.9" ry="1.7" fill="#2f7030" transform="rotate(-165 164.7 127.6)"/>
<ellipse cx="164.7" cy="127.1" rx="3.2" ry="1.2" fill="#62ac38" transform="rotate(-165 164.7 127.1)"/>
<ellipse cx="166.5" cy="125.8" rx="3.9" ry="1.7" fill="#2f7030" transform="rotate(-122 166.5 125.8)"/>
<ellipse cx="166.5" cy="125.3" rx="3.2" ry="1.2" fill="#62ac38" transform="rotate(-122 166.5 125.3)"/>
<ellipse cx="169.3" cy="125.6" rx="3.9" ry="1.7" fill="#2f7030" transform="rotate(-70 169.3 125.6)"/>
<ellipse cx="169.3" cy="125.1" rx="3.2" ry="1.2" fill="#62ac38" transform="rotate(-70 169.3 125.1)"/>
<ellipse cx="171.4" cy="127.1" rx="3.9" ry="1.7" fill="#2f7030" transform="rotate(-24 171.4 127.1)"/>
<ellipse cx="171.4" cy="126.6" rx="3.2" ry="1.2" fill="#62ac38" transform="rotate(-24 171.4 126.6)"/>
<ellipse cx="169.8" cy="128.6" rx="3.9" ry="1.7" fill="#3a7c30" transform="rotate(5 169.8 128.6)"/>
<ellipse cx="169.8" cy="128.1" rx="3.2" ry="1.2" fill="#86c444" transform="rotate(5 169.8 128.1)"/>
<ellipse cx="168.5" cy="129.9" rx="3.9" ry="1.7" fill="#3a7c30" transform="rotate(76 168.5 129.9)"/>
<ellipse cx="168.5" cy="129.4" rx="3.2" ry="1.2" fill="#86c444" transform="rotate(76 168.5 129.4)"/>
<ellipse cx="166.8" cy="129.2" rx="3.9" ry="1.7" fill="#3a7c30" transform="rotate(154 166.8 129.2)"/>
<ellipse cx="166.8" cy="128.7" rx="3.2" ry="1.2" fill="#86c444" transform="rotate(154 166.8 128.7)"/>
<ellipse cx="167.0" cy="127.6" rx="3.9" ry="1.7" fill="#3a7c30" transform="rotate(-143 167.0 127.6)"/>
<ellipse cx="167.0" cy="127.1" rx="3.2" ry="1.2" fill="#86c444" transform="rotate(-143 167.0 127.1)"/>
<ellipse cx="168.9" cy="127.2" rx="3.9" ry="1.7" fill="#3a7c30" transform="rotate(-63 168.9 127.2)"/>
<ellipse cx="168.9" cy="126.7" rx="3.2" ry="1.2" fill="#86c444" transform="rotate(-63 168.9 126.7)"/>
<ellipse cx="201.1" cy="127.3" rx="5.2" ry="2.2" fill="#2c6a2e" transform="rotate(0 201.1 127.3)"/>
<ellipse cx="201.1" cy="126.8" rx="4.3" ry="1.5" fill="#4c9a34" transform="rotate(0 201.1 126.8)"/>
<ellipse cx="199.9" cy="131.1" rx="5.2" ry="2.2" fill="#2c6a2e" transform="rotate(30 199.9 131.1)"/>
<ellipse cx="199.9" cy="130.6" rx="4.3" ry="1.5" fill="#4c9a34" transform="rotate(30 199.9 130.6)"/>
<ellipse cx="196.6" cy="133.6" rx="5.2" ry="2.2" fill="#2c6a2e" transform="rotate(63 196.6 133.6)"/>
<ellipse cx="196.6" cy="133.1" rx="4.3" ry="1.5" fill="#4c9a34" transform="rotate(63 196.6 133.1)"/>
<ellipse cx="192.3" cy="134.2" rx="5.2" ry="2.2" fill="#2c6a2e" transform="rotate(99 192.3 134.2)"/>
<ellipse cx="192.3" cy="133.7" rx="4.3" ry="1.5" fill="#4c9a34" transform="rotate(99 192.3 133.7)"/>
<ellipse cx="188.4" cy="132.5" rx="5.2" ry="2.2" fill="#2c6a2e" transform="rotate(134 188.4 132.5)"/>
<ellipse cx="188.4" cy="132.0" rx="4.3" ry="1.5" fill="#4c9a34" transform="rotate(134 188.4 132.0)"/>
<ellipse cx="186.0" cy="129.3" rx="5.2" ry="2.2" fill="#2c6a2e" transform="rotate(165 186.0 129.3)"/>
<ellipse cx="186.0" cy="128.8" rx="4.3" ry="1.5" fill="#4c9a34" transform="rotate(165 186.0 128.8)"/>
<ellipse cx="186.0" cy="125.3" rx="5.2" ry="2.2" fill="#2c6a2e" transform="rotate(-165 186.0 125.3)"/>
<ellipse cx="186.0" cy="124.8" rx="4.3" ry="1.5" fill="#4c9a34" transform="rotate(-165 186.0 124.8)"/>
<ellipse cx="188.4" cy="122.1" rx="5.2" ry="2.2" fill="#2c6a2e" transform="rotate(-134 188.4 122.1)"/>
<ellipse cx="188.4" cy="121.6" rx="4.3" ry="1.5" fill="#4c9a34" transform="rotate(-134 188.4 121.6)"/>
<ellipse cx="192.3" cy="120.4" rx="5.2" ry="2.2" fill="#2c6a2e" transform="rotate(-99 192.3 120.4)"/>
<ellipse cx="192.3" cy="119.9" rx="4.3" ry="1.5" fill="#4c9a34" transform="rotate(-99 192.3 119.9)"/>
<ellipse cx="196.6" cy="121.0" rx="5.2" ry="2.2" fill="#2c6a2e" transform="rotate(-63 196.6 121.0)"/>
<ellipse cx="196.6" cy="120.5" rx="4.3" ry="1.5" fill="#4c9a34" transform="rotate(-63 196.6 120.5)"/>
<ellipse cx="199.9" cy="123.5" rx="5.2" ry="2.2" fill="#2c6a2e" transform="rotate(-30 199.9 123.5)"/>
<ellipse cx="199.9" cy="123.0" rx="4.3" ry="1.5" fill="#4c9a34" transform="rotate(-30 199.9 123.0)"/>
<ellipse cx="198.0" cy="128.6" rx="5.2" ry="2.2" fill="#2f7030" transform="rotate(16 198.0 128.6)"/>
<ellipse cx="198.0" cy="128.1" rx="4.3" ry="1.5" fill="#62ac38" transform="rotate(16 198.0 128.1)"/>
<ellipse cx="195.6" cy="131.1" rx="5.2" ry="2.2" fill="#2f7030" transform="rotate(60 195.6 131.1)"/>
<ellipse cx="195.6" cy="130.6" rx="4.3" ry="1.5" fill="#62ac38" transform="rotate(60 195.6 130.6)"/>
<ellipse cx="192.0" cy="131.4" rx="5.2" ry="2.2" fill="#2f7030" transform="rotate(109 192.0 131.4)"/>
<ellipse cx="192.0" cy="130.9" rx="4.3" ry="1.5" fill="#62ac38" transform="rotate(109 192.0 130.9)"/>
<ellipse cx="189.2" cy="129.3" rx="5.2" ry="2.2" fill="#2f7030" transform="rotate(155 189.2 129.3)"/>
<ellipse cx="189.2" cy="128.8" rx="4.3" ry="1.5" fill="#62ac38" transform="rotate(155 189.2 128.8)"/>
<ellipse cx="188.8" cy="126.0" rx="5.2" ry="2.2" fill="#2f7030" transform="rotate(-164 188.8 126.0)"/>
<ellipse cx="188.8" cy="125.5" rx="4.3" ry="1.5" fill="#62ac38" transform="rotate(-164 188.8 125.5)"/>
<ellipse cx="191.2" cy="123.5" rx="5.2" ry="2.2" fill="#2f7030" transform="rotate(-120 191.2 123.5)"/>
<ellipse cx="191.2" cy="123.0" rx="4.3" ry="1.5" fill="#62ac38" transform="rotate(-120 191.2 123.0)"/>
<ellipse cx="194.8" cy="123.2" rx="5.2" ry="2.2" fill="#2f7030" transform="rotate(-71 194.8 123.2)"/>
<ellipse cx="194.8" cy="122.7" rx="4.3" ry="1.5" fill="#62ac38" transform="rotate(-71 194.8 122.7)"/>
<ellipse cx="197.6" cy="125.3" rx="5.2" ry="2.2" fill="#2f7030" transform="rotate(-25 197.6 125.3)"/>
<ellipse cx="197.6" cy="124.8" rx="4.3" ry="1.5" fill="#62ac38" transform="rotate(-25 197.6 124.8)"/>
<ellipse cx="195.5" cy="127.5" rx="5.2" ry="2.2" fill="#3a7c30" transform="rotate(5 195.5 127.5)"/>
<ellipse cx="195.5" cy="127.0" rx="4.3" ry="1.5" fill="#86c444" transform="rotate(5 195.5 127.0)"/>
<ellipse cx="193.9" cy="129.2" rx="5.2" ry="2.2" fill="#3a7c30" transform="rotate(76 193.9 129.2)"/>
<ellipse cx="193.9" cy="128.7" rx="4.3" ry="1.5" fill="#86c444" transform="rotate(76 193.9 128.7)"/>
<ellipse cx="191.5" cy="128.3" rx="5.2" ry="2.2" fill="#3a7c30" transform="rotate(152 191.5 128.3)"/>
<ellipse cx="191.5" cy="127.8" rx="4.3" ry="1.5" fill="#86c444" transform="rotate(152 191.5 127.8)"/>
<ellipse cx="191.8" cy="126.0" rx="5.2" ry="2.2" fill="#3a7c30" transform="rotate(-141 191.8 126.0)"/>
<ellipse cx="191.8" cy="125.5" rx="4.3" ry="1.5" fill="#86c444" transform="rotate(-141 191.8 125.5)"/>
<ellipse cx="194.3" cy="125.5" rx="5.2" ry="2.2" fill="#3a7c30" transform="rotate(-64 194.3 125.5)"/>
<ellipse cx="194.3" cy="125.0" rx="4.3" ry="1.5" fill="#86c444" transform="rotate(-64 194.3 125.0)"/>
<circle cx="191" cy="123" r="1.6" fill="#9aa8a0"/><circle cx="197" cy="130" r="1.4" fill="#9aa8a0"/><circle cx="167" cy="127.5" r="1.4" fill="#9aa8a0"/>
<g filter="url(#leafy)"><path d="M13 152q-2-3 3-4l34-1 15 2q4 1 4 6l1 44q0 6-6 7l-24 4-22-3q-6-1-7-8zM82 148q3-2 6 1 3-3 8 0 4 1 4 5-4 6-9 6-8-1-9-12zM106 144q6-6 11-3 8-2 10 5 2 8-4 13-7 7-14 0-6-7-3-15zM79 170q10-6 20-5h26q4 0 4 5v22q0 8-4 16-2 7-8 7l-28 0q-6-2-8-8z" fill="#5aa030"/></g>
<path d="M14 160q8-8 20-9-10 8-14 20zM84 176q6-6 14-6-6 6-8 14z" fill="#8fcf4a" opacity="0.35"/><path d="M66 160l3 36-8 10 2-20zM126 176l2 20-6 16 0-16z" fill="#245c22" opacity="0.35"/>
<ellipse cx="170" cy="162" rx="4" ry="1.8" fill="#c8c4d0"/><rect x="164.8" y="141" width="5.4" height="22" rx="1" fill="#8a5a28"/><rect x="168" y="141" width="2.2" height="22" fill="#6a401c"/><rect x="164.8" y="140" width="5.4" height="2.4" fill="#a8c860"/>
<path d="M187.5 157l5-4 3 1 5-2-1 4 3 2-6 2-2-2-4 2z" fill="#2f8a3c"/><ellipse cx="196" cy="161.5" rx="4.5" ry="1.4" fill="#c8c4d0"/><path d="M190.6 146.5l2-2.2 1.6 1.6 1.6-1.8 1.4 2.2-0.6 3.6-2.4 1.4-2.8-1.6z" fill="#e070c4"/><circle cx="194" cy="147.6" r="1.3" fill="#f8d0ec"/>
<rect x="131.6" y="175.8" width="20.4" height="3.6" rx="1.6" fill="#8e5824" transform="rotate(0 141.8 177.6)"/>
<rect x="131.6" y="175.8" width="20.4" height="3.6" rx="1.6" fill="#a86c2c" transform="rotate(35 141.8 177.6)"/>
<rect x="131.6" y="175.8" width="20.4" height="3.6" rx="1.6" fill="#8e5824" transform="rotate(70 141.8 177.6)"/>
<rect x="131.6" y="175.8" width="20.4" height="3.6" rx="1.6" fill="#8e5824" transform="rotate(110 141.8 177.6)"/>
<rect x="131.6" y="175.8" width="20.4" height="3.6" rx="1.6" fill="#a86c2c" transform="rotate(145 141.8 177.6)"/>
<circle cx="141.8" cy="177.6" r="2" fill="#6a3c18"/>
<ellipse cx="178.3" cy="178.0" rx="3.2" ry="2.6" fill="#94887e"/>
<ellipse cx="176.9" cy="182.3" rx="3.2" ry="2.6" fill="#b0a49c"/>
<ellipse cx="173.2" cy="185.4" rx="3.2" ry="2.6" fill="#94887e"/>
<ellipse cx="168.1" cy="186.6" rx="3.2" ry="2.6" fill="#b0a49c"/>
<ellipse cx="163.0" cy="185.4" rx="3.2" ry="2.6" fill="#94887e"/>
<ellipse cx="159.3" cy="182.3" rx="3.2" ry="2.6" fill="#b0a49c"/>
<ellipse cx="157.9" cy="178.0" rx="3.2" ry="2.6" fill="#94887e"/>
<ellipse cx="159.3" cy="173.7" rx="3.2" ry="2.6" fill="#b0a49c"/>
<ellipse cx="163.0" cy="170.6" rx="3.2" ry="2.6" fill="#94887e"/>
<ellipse cx="168.1" cy="169.4" rx="3.2" ry="2.6" fill="#b0a49c"/>
<ellipse cx="173.2" cy="170.6" rx="3.2" ry="2.6" fill="#94887e"/>
<ellipse cx="176.9" cy="173.7" rx="3.2" ry="2.6" fill="#b0a49c"/>
<rect x="159.6" y="176.4" width="17" height="3.4" rx="1.5" fill="#96602a" transform="rotate(10 168.1 178)"/>
<rect x="159.6" y="176.4" width="17" height="3.4" rx="1.5" fill="#96602a" transform="rotate(60 168.1 178)"/>
<rect x="159.6" y="176.4" width="17" height="3.4" rx="1.5" fill="#96602a" transform="rotate(120 168.1 178)"/>
<rect x="159.6" y="176.4" width="17" height="3.4" rx="1.5" fill="#96602a" transform="rotate(160 168.1 178)"/>
<rect x="184" y="168" width="5.4" height="19" rx="2" fill="#a87434"/><rect x="187.4" y="169" width="2" height="17.6" rx="1" fill="#7e5222"/><ellipse cx="186.7" cy="169.2" rx="2.7" ry="1.7" fill="#dcae6c"/>
<rect x="198.2" y="165" width="5.4" height="14" rx="2" fill="#a87434"/><rect x="201.6" y="166" width="2" height="12.6" rx="1" fill="#7e5222"/><ellipse cx="200.9" cy="166.2" rx="2.7" ry="1.7" fill="#dcae6c"/>
<rect x="190.8" y="171.5" width="5.4" height="16" rx="2" fill="#a87434"/><rect x="194.2" y="172.5" width="2" height="14.6" rx="1" fill="#7e5222"/><ellipse cx="193.5" cy="172.7" rx="2.7" ry="1.7" fill="#dcae6c"/>
<rect x="185.4" y="176.5" width="5.4" height="11.5" rx="2" fill="#a87434"/><rect x="188.8" y="177.5" width="2" height="10.1" rx="1" fill="#7e5222"/><ellipse cx="188.1" cy="177.7" rx="2.7" ry="1.7" fill="#dcae6c"/>
<rect x="199.2" y="174" width="5.4" height="14" rx="2" fill="#a87434"/><rect x="202.6" y="175" width="2" height="12.6" rx="1" fill="#7e5222"/><ellipse cx="201.9" cy="175.2" rx="2.7" ry="1.7" fill="#dcae6c"/>
<rect x="192.4" y="178.6" width="5.4" height="9.6" rx="2" fill="#a87434"/><rect x="195.8" y="179.6" width="2" height="8.2" rx="1" fill="#7e5222"/><ellipse cx="195.1" cy="179.8" rx="2.7" ry="1.7" fill="#dcae6c"/>
<ellipse cx="52" cy="331.5" rx="29" ry="11.5" fill="#bab6c2" filter="url(#rough)"/>
<path d="M44 318l-1 12-5 7 5-1 2 5 3-5 3 7 2-7 3 3 1-4 5 1-5-7-1-11z" fill="#9a6a34"/><path d="M52 320l1 16 2-7 3 3 1-4 5 1-5-7-1-6z" fill="#74481f"/>
<g filter="url(#crownf)"><path d="M50 217c10-2 18 6 21 16 9 6 14 16 15 28 6 8 9 20 6 30-2 12-12 18-22 24-10 6-26 6-36 0-12-4-24-10-28-24-4-10-2-24 4-32 2-12 8-20 18-24 4-10 12-17 22-18z" fill="url(#crowng)"/>
<path d="M72 252c8 4 13 12 14 22 5 8 7 18 4 26-3 10-12 16-22 22-8 4-14 4-20 3 8-4 14-8 18-18 5-10 8-24 8-36 0-8-1-14-2-19z" fill="#24503c" opacity="0.55"/></g>
<ellipse cx="158" cy="330" rx="28" ry="10" fill="#bab6c2" filter="url(#rough)"/>
<g fill="none" stroke="#a9783e" stroke-linecap="round" stroke-linejoin="round">
<path d="M149.600 336C150 310 150.600 286 152.400 256L156 256C157.400 286 157.600 310 158 336Z" fill="#a9783e" stroke="none"/>
<path d="M154 256C153 244 150 236 144 228M150 238C148 232 145 228 142 222M154 254C158 240 164 232 170 218M163 234C166 230 170 230 172 226" stroke-width="3.4"/>
<path d="M151 278C140 272 134 262 130 250M134 258C128 258 120 258 110 260M132 254C128 250 124 248 118 244M138 264C140 256 142 250 146 246" stroke-width="3"/>
<path d="M156 276C168 272 176 262 184 250M178 258C184 252 188 250 190 246M186 248C188 242 190 240 194 236M174 262C172 254 168 250 166 246M184 250C192 252 198 250 201 248" stroke-width="3"/>
<path d="M157 292C172 286 184 278 194 264M186 274C192 272 196 270 200 266M176 282C182 288 188 290 192 296" stroke-width="3"/>
<path d="M151 300C136 296 122 296 108 290M126 295C122 290 118 286 112 282M132 296C128 302 122 304 116 310" stroke-width="2.8"/>
<path d="M156 308C170 304 186 302 200 300M180 303C184 308 188 312 190 318M172 304C176 300 182 298 188 296" stroke-width="2.6"/>
<path d="M151 312C140 312 130 314 118 320M134 313C130 318 128 322 124 326" stroke-width="2.6"/>
</g>
<path d="M148 322l-1 10-7 5 6 0 3 6 3-6 4 7 2-7 5 2-1-4 6 0-6-5-1-8z" fill="#9c6c36"/><path d="M154.600 258c0.800 24 1 52 1 78l2.600-3 5 2-1-4 6 0-6-5-1.200-8c-0.400-22-0.800-42-2-60z" fill="#7c5428" opacity="0.750"/>
<rect x="9.4" y="350.3" width="4.6" height="70" fill="#b9bdb6"/><rect x="12.0" y="350.3" width="2" height="70" fill="#5c6a60"/><rect x="8.8" y="404.6" width="5.2" height="15.6" fill="#46564c"/>
<rect x="43.6" y="350.3" width="4.6" height="70" fill="#b9bdb6"/><rect x="46.2" y="350.3" width="2" height="70" fill="#5c6a60"/><rect x="43.0" y="404.6" width="5.2" height="15.6" fill="#46564c"/>
<rect x="56" y="375.9" width="72" height="1.6" fill="#c9c6d2"/>
<rect x="63.6" y="363.5" width="4.4" height="14.4" fill="#4a5a50"/>
<rect x="89.2" y="363.5" width="4.4" height="14.4" fill="#4a5a50"/>
<rect x="114.6" y="363.5" width="4.4" height="14.4" fill="#4a5a50"/>
<rect x="53.7" y="359.5" width="75.1" height="3" fill="#b4bcb0"/><rect x="53.7" y="362.1" width="75.1" height="2.8" fill="#485a4e"/>
<rect x="56" y="418.2" width="72" height="1.6" fill="#c9c6d2"/>
<rect x="63.6" y="405.8" width="4.4" height="14.4" fill="#4a5a50"/>
<rect x="89.2" y="405.8" width="4.4" height="14.4" fill="#4a5a50"/>
<rect x="114.6" y="405.8" width="4.4" height="14.4" fill="#4a5a50"/>
<rect x="53.7" y="401.8" width="75.1" height="3" fill="#b4bcb0"/><rect x="53.7" y="404.4" width="75.1" height="2.8" fill="#485a4e"/>
<g>
<rect x="133.3" y="344.2" width="70.1" height="50.2" fill="#b9bbb1"/>
<rect x="133.3" y="350.0" width="70.1" height="1" fill="#7e857a"/>
<rect x="133.3" y="356.2" width="70.1" height="1" fill="#7e857a"/>
<rect x="133.3" y="362.5" width="70.1" height="1" fill="#7e857a"/>
<rect x="133.3" y="368.8" width="70.1" height="1" fill="#7e857a"/>
<rect x="133.3" y="375.1" width="70.1" height="1" fill="#7e857a"/>
<rect x="133.3" y="381.3" width="70.1" height="1" fill="#7e857a"/>
<rect x="133.3" y="387.6" width="70.1" height="1" fill="#7e857a"/>
<rect x="133.3" y="344.2" width="70.1" height="50.2" fill="none" stroke="#8a9086" stroke-width="0.8"/>
<path d="M150 372l4-1 1 3 3 1-2 4 3 2-3 3 2 4-2 6.4-9 0 3-4-2-3 3-3-4-3 3-4zM164 372l3 2 4-2 1 6-2 5 3 4-1 7.4-8 0 2-5-3-4 3-5zM174 372l4 2 5-2 3 3-2 5 2 5-2 4 1 5.4-9 0-2-6 2-4-3-5z" fill="#f5f5f8"/>
<path d="M150 372l4-1 1 3-4 1zM154 380l3 2-3 3-2-2zM164 372l3 2-1 3-3-1zM182 375l3 0-2 5-2-1zM180 385l3 0-2 4-2-1z" fill="#4e5c50"/>
<rect x="131.3" y="395.2" width="22.5" height="25.2" fill="#b9bbb1" stroke="#8a9086" stroke-width="0.8"/>
<rect x="131.3" y="401.1" width="22.5" height="0.9" fill="#7e857a"/>
<rect x="131.3" y="407.4" width="22.5" height="0.9" fill="#7e857a"/>
<rect x="131.3" y="413.7" width="22.5" height="0.9" fill="#7e857a"/>
<rect x="154.8" y="399.2" width="50.9" height="73.2" fill="#bcbeb4"/>
<rect x="160.8" y="399.2" width="0.9" height="73.2" fill="#7e857a" opacity="0.85"/>
<rect x="167.1" y="399.2" width="0.9" height="73.2" fill="#7e857a" opacity="0.85"/>
<rect x="173.5" y="399.2" width="0.9" height="73.2" fill="#7e857a" opacity="0.85"/>
<rect x="179.8" y="399.2" width="0.9" height="73.2" fill="#7e857a" opacity="0.85"/>
<rect x="186.2" y="399.2" width="0.9" height="73.2" fill="#7e857a" opacity="0.85"/>
<rect x="192.6" y="399.2" width="0.9" height="73.2" fill="#7e857a" opacity="0.85"/>
<rect x="198.9" y="399.2" width="0.9" height="73.2" fill="#7e857a" opacity="0.85"/>
<path d="M154.800 408.600l3 0.800 3-1.400 3 1.600 3-2 3.400 1 3-1.600 3.400 1.400 1.400-0.600v6l-26.200 0.200z" fill="#56645a"/>
<path d="M154.800 414.200l2.400-1.400 3 0.600 3.400-2 3 1.600 4.400-0.400 3 -1.400 3.400 1 3.600-0.800v9.600l-4-1.200-3 1.400-3.400-1.800-4 1.600-3.600-1-3.400 1.400-3-1-1.800 0.600z" fill="#f5f5f8"/>
<path d="M154.800 430.600l5 0.400 4-0.800 4 0.600 4.600 5.600 4-5.800 4.600-0.400v5.200l-4.400-0.600-4 4.800-4.800-4.600-4.600 1-4.400-0.800-4 0.600z" fill="#f5f5f8"/>
<path d="M154.800 446l4.600 0.600 4-1 4.400 1 4.400 5.400 4.200-5.600 4.600-0.600v6.800l-4.800-0.400-4 4.400-4.600-4.200-4.400 0.800-4.400-0.600-4 0.400z" fill="#f5f5f8"/>
<rect x="130.2" y="424" width="24.6" height="20" fill="#b9bbb1"/>
<rect x="135.9" y="424" width="0.9" height="20" fill="#7e857a"/>
<rect x="142.1" y="424" width="0.9" height="20" fill="#7e857a"/>
<rect x="148.2" y="424" width="0.9" height="20" fill="#7e857a"/>
<rect x="130.2" y="443.6" width="24.6" height="9.4" fill="#54645a"/><rect x="130.2" y="446.6" width="24.6" height="2.4" fill="#7e8a7e"/><rect x="140.6" y="453" width="2.4" height="8.6" rx="1" fill="#3e5248"/>
<rect x="130.2" y="472.3" width="75.5" height="2" fill="#b4bcb0"/><rect x="130.2" y="474" width="75.5" height="2.4" fill="#485a4e"/><rect x="133" y="476.2" width="68" height="1.6" fill="#6a786c"/><rect x="140.6" y="477" width="2.6" height="11" rx="1" fill="#3e5248"/><rect x="192" y="477" width="2.6" height="11" rx="1" fill="#3e5248"/>
</g>
<rect x="116.9" y="472" width="5" height="75" fill="#c9c6d2"/><rect x="14" y="545" width="106" height="2.8" fill="#c9c6d2"/>
<path d="M65.6 421.2C60 440 36 462 14.4 469.3L14.4 545.2L65.6 545.2Z" fill="#e6be94"/>
<path d="M65.6 421.2C71 440 95 462 116.9 469.3L116.9 545.2L65.6 545.2Z" fill="#c79a6e"/>
<path d="M65.6 421.2C66 450 66 480 65.6 497L14.4 545.2L14.4 540C30 520 50 480 58 440Z" fill="#d8ae84" opacity="0.7"/>
<path d="M65.6 497L14.4 545.2L53.7 545.2L53.7 515Z" fill="#c9a074"/><path d="M65.6 497L116.9 545.2L77.5 545.2L77.5 515Z" fill="#a97f56"/>
<path d="M65.6 421.2L67 497L65.6 497L64.4 497Z" fill="#a88058"/>
<path d="M80 450l6 30 8 30 6 24M92 462l8 36 8 30M72 440l4 40" stroke="#a27a52" stroke-width="1.2" fill="none" opacity="0.6"/><path d="M50 450l-8 34-10 36M36 464l-8 40-6 28" stroke="#c9a27a" stroke-width="1.2" fill="none" opacity="0.7"/>
<rect x="53.7" y="514.6" width="23.8" height="28.2" fill="#222a3c"/><path d="M53.7 542.8h23.8v-6q-8-5-14-1-6 3-9.800 3z" fill="#6a3424"/><rect x="53" y="508.3" width="25.2" height="6.8" rx="1" fill="#d8b160"/><rect x="53" y="510.6" width="25.2" height="1.6" fill="#b88c3c"/>
<rect x="9.2" y="460" width="5.2" height="13.6" fill="#b8923e"/><rect x="9.2" y="469.6" width="5.2" height="4" fill="#7a5a22"/><rect x="10.2" y="460" width="2" height="9.6" fill="#dcc070"/>
<rect x="116.9" y="460" width="5.2" height="13.6" fill="#b8923e"/><rect x="116.9" y="469.6" width="5.2" height="4" fill="#7a5a22"/><rect x="117.9" y="460" width="2" height="9.6" fill="#dcc070"/>
<rect x="9.2" y="534" width="5.2" height="14.3" fill="#b8923e"/><rect x="9.2" y="544.3" width="5.2" height="4" fill="#7a5a22"/><rect x="10.2" y="534" width="2" height="10.3" fill="#dcc070"/>
<rect x="116.9" y="534" width="5.2" height="14.3" fill="#b8923e"/><rect x="116.9" y="544.3" width="5.2" height="4" fill="#7a5a22"/><rect x="117.9" y="534" width="2" height="10.3" fill="#dcc070"/>
</svg>
<!-- ================= LEFT PANEL : MAP TREE ================= -->
<div class="abs" style="left:0;top:607px;width:221px;height:3px;background:#d4d0c8"></div>
<div class="abs" style="left:0;top:610px;width:221px;height:169px;background:#fbfbfb;border-left:1.5px solid #404040;border-top:1.5px solid #404040;border-right:1.5px solid #f0eee8;border-bottom:1px solid #fff"></div>
<div class="abs" style="left:2px;top:625px;width:217px;height:11.6px;background:#d4d0c8"></div>
<svg class="abs" style="left:3px;top:612px" width="30" height="26" viewBox="0 0 30 26"><path d="M1 2.6q0-1.400 1.400-1.400h3.200l1.400 1.500h5q1.200 0 1.200 1.200v5.600q0 1.200-1.200 1.200h-9.800q-1.200 0-1.200-1.200z" fill="#e8c050" stroke="#b8902c" stroke-width="0.7"/><path d="M1.400 4.600h11.400v4.800q0 1-1 1h-9.400q-1 0-1-1z" fill="#f6dc80"/><path d="M17.600 13.400h6.600l3 3v8.400h-9.600z" fill="#a8c8f0" stroke="#6088c8" stroke-width="0.8"/><path d="M19.400 17h3v2.400h3v4h-6z" fill="#e8f0fc"/></svg>
<div class="abs lbl" style="left:20px;top:613.3px;letter-spacing:-0.3px">random</div>
<div class="abs lbl" style="left:35.4px;top:626.3px;letter-spacing:-0.62px">MAP001</div>
<!--LEFT-END-->

<!-- ================= MAP AREA ================= -->
<div class="abs" style="left:224px;top:61px;width:800px;height:718px;background:#808080;border-left:1px solid #404040;border-top:1px solid #404040"></div>
<svg class="abs" style="left:225px;top:62px" width="512" height="384" viewBox="0 0 512 384">
  <defs>
    <filter id="gnoise" x="0" y="0" width="100%" height="100%" color-interpolation-filters="sRGB">
      <feTurbulence type="fractalNoise" baseFrequency="0.75" numOctaves="1" seed="7"/>
      <feColorMatrix type="matrix" values="0.55 0.1 0 0 0.22  0.25 0.15 0 0 0.535  0 0 0.35 0 0.09  0 0 0 0 1"/>
    </filter>
    <pattern id="grid" width="25.6" height="25.6" patternUnits="userSpaceOnUse">
      <path d="M0 0H25.6M0 25.6H25.6M0 0V25.6M25.6 0V25.6" stroke="#5f8a2c" stroke-width="1.5" opacity="0.8"/>
    </pattern>
  </defs>
  <rect width="512" height="384" fill="#8abc42"/>
  <rect width="512" height="384" filter="url(#gnoise)"/>
  <rect width="512" height="384" fill="url(#grid)"/>
</svg>

<!--DIALOG-START-->
<!-- ================= DATABASE DIALOG ================= -->
<style>
#dlg{left:227.8px;top:137px;width:569.4px;height:521.2px;background:#d4d0c8;border:1px solid;border-color:#d4d0c8 #404040 #404040 #d4d0c8;box-shadow:inset 1px 1px 0 #fff,inset -1px -1px 0 #808080}
#screen .t{position:absolute;white-space:nowrap;font-size:8.8px;line-height:10.4px;letter-spacing:-0.12px;color:#000}
#dtitle{left:229.7px;top:139px;width:564.8px;height:14.4px;background:linear-gradient(90deg,#0a246a 0%,#123480 22%,#4a78c0 55%,#94bcea 85%,#a6caf0 100%)}
#dtitle b{position:absolute;left:1px;top:1.6px;color:#fff;font-size:9.6px;line-height:11px;letter-spacing:0.05px}
.dcap{top:141.2px;width:12.4px;height:10.6px;background:#d4d0c8;border:1px solid;border-color:#fff #404040 #404040 #fff;box-shadow:inset -1px -1px 0 #808080;font-weight:bold;font-size:9px;line-height:8.4px;text-align:center}
.tab{top:161.8px;height:14.6px;border-left:1px solid #fff;border-top:1px solid #fff;border-right:1.4px solid #5a5852;border-radius:2px 2px 0 0;background:#d4d0c8;font-size:8.8px;line-height:14.2px;white-space:nowrap;letter-spacing:-0.15px;padding-left:3.4px}
.grp{border:1px solid;border-color:#808080 #fff #fff #808080;box-shadow:inset 1px 1px 0 #fff,1px 1px 0 transparent}
.b{background:#d4d0c8;border:1px solid;border-color:#fff #404040 #404040 #fff;box-shadow:inset -1px -1px 0 #808080;text-align:center;white-space:nowrap;font-size:8.8px;letter-spacing:-0.12px;color:#000}
.field{background:#fff;border:1px solid;border-color:#808080 #fff #fff #808080;box-shadow:inset 1px 1px 0 #404040,inset -1px -1px 0 #d4d0c8}
.sbtn{background:#d4d0c8;border:1px solid;border-color:#fff #404040 #404040 #fff;box-shadow:inset -1px -1px 0 #808080}
.sbtrack{background:#e9e7e2}
#alist div{position:absolute;left:0.8px;width:104px;height:10.4px;padding-left:0.8px;font-size:8.8px;line-height:10.4px;letter-spacing:-0.1px;white-space:nowrap}
</style>
<div id="dlg" class="abs"></div>
<div id="dtitle" class="abs"><b>Database</b></div>
<div class="dcap abs" style="left:766.2px">?</div><div class="dcap abs" style="left:780.6px">×</div>
<div class="abs" style="left:235px;top:176px;width:555px;height:451.6px;border:1px solid;border-color:#fff #404040 #404040 #fff;box-shadow:inset -1px -1px 0 #808080;background:#d4d0c8"></div>
<div class="tab abs" style="left:236.6px;width:33.3px">Actors</div>
<div class="tab abs" style="left:271.2px;width:37.8px">Classes</div>
<div class="tab abs" style="left:310.2px;width:31.4px">Skills</div>
<div class="tab abs" style="left:342.8px;width:32.5px">Items</div>
<div class="tab abs" style="left:376.6px;width:44.8px">Weapons</div>
<div class="tab abs" style="left:422.6px;width:35.4px">Armors</div>
<div class="tab abs" style="left:459.2px;width:40.6px">Enemies</div>
<div class="tab abs" style="left:501px;width:33.6px">Troops</div>
<div class="tab abs" style="left:535.8px;width:32.2px">States</div>
<div class="tab abs" style="left:622px;width:36.3px">Tilesets</div>
<div class="tab abs" style="left:659.6px;width:69.9px"><span style="letter-spacing:-0.34px">Common Events</span></div>
<div class="tab abs" style="left:730.8px;width:36.2px">System</div>
<div class="tab abs" style="left:567.6px;top:160.2px;width:54px;height:17px;padding-left:5.6px;line-height:13px;z-index:2;border-right:1.4px solid #404040">Animations</div>
<div class="abs" style="left:243.1px;top:183.9px;width:117.9px;height:18.3px;background:#000;color:#fff;font-size:13px;line-height:18px;text-align:center;border:1px solid;border-color:#808080 #fff #fff #808080">Animations</div>
<div class="abs field" style="left:242.4px;top:206.6px;width:119.2px;height:387.6px"></div>
<div id="alist" class="abs" style="left:243.1px;top:209.1px;width:105px;height:385px">
<div style="top:0.0px">073: Spear-skill 3</div>
<div style="top:10.4px">074: Spear-skill 4</div>
<div style="top:20.8px">075: Axe-skill 1</div>
<div style="top:31.2px">076: Axe-skill 2</div>
<div style="top:41.6px">077: Axe-skill 3</div>
<div style="top:52.0px">078: Axe-skill 4</div>
<div style="top:62.4px">079: Knife-skill 1</div>
<div style="top:72.8px">080: Knife-skill 2</div>
<div style="top:83.2px">081: Knife-skill 3</div>
<div style="top:93.6px">082: Knife-skill 4</div>
<div style="top:104.0px">083: Bow-skill 1</div>
<div style="top:114.4px">084: Bow-skill 2</div>
<div style="top:124.8px">085: Bow-skill 3</div>
<div style="top:135.2px">086: Bow-skill 4</div>
<div style="top:145.6px">087: Gun-skill 1</div>
<div style="top:156.0px">088: Gun-skill 2</div>
<div style="top:166.4px">089: Gun-skill 3</div>
<div style="top:176.8px">090: Gun-skill 4</div>
<div style="top:187.2px">091: ST Venom</div>
<div style="top:197.6px">092: ST Dazzle</div>
<div style="top:208.0px">093: ST Mute</div>
<div style="top:218.4px">094: ST Confuse</div>
<div style="top:228.8px">095: ST Sleep</div>
<div style="top:239.2px">096: ST Paralyze</div>
<div style="top:249.6px">097: EM Question</div>
<div style="top:260.0px">098: EM Exclamation</div>
<div style="top:270.4px">099: Explosion 1</div>
<div style="top:280.8px">100: Explosion 2</div>
<div style="top:291.2px;background:#0a246a;color:#fff">101:</div>
<div style="top:301.6px">102:</div>
<div style="top:312.0px">103:</div>
<div style="top:322.4px">104:</div>
<div style="top:332.8px">105:</div>
<div style="top:343.2px">106:</div>
<div style="top:353.6px">107:</div>
<div style="top:364.0px">108:</div>
<div style="top:374.4px">109:</div>
</div>
<div class="abs sbtrack" style="left:348.4px;top:208.2px;width:12px;height:384.8px"></div>
<div class="abs sbtn" style="left:348.4px;top:208.2px;width:12px;height:12.4px"></div><svg class="abs" style="left:351.4px;top:212.4px" width="6" height="4" viewBox="0 0 6 4"><path d="M0 3.600L3 0.400L6 3.600Z" fill="#000"/></svg>
<div class="abs sbtn" style="left:348.4px;top:580.8px;width:12px;height:12.2px"></div><svg class="abs" style="left:351.4px;top:585.2px" width="6" height="4" viewBox="0 0 6 4"><path d="M0 0.400L3 3.600L6 0.400Z" fill="#000"/></svg>
<div class="abs sbtn" style="left:348.4px;top:437.7px;width:12px;height:110px"></div>
<div class="abs b" style="left:242.2px;top:600.4px;width:119.5px;height:17px;line-height:14.6px">Change Maximum...</div>
<div class="abs grp" style="left:369.6px;top:182.4px;width:412.4px;height:435.2px"></div>
<div class="t abs" style="left:379px;top:194px">Name:</div>
<div class="abs field" style="left:379px;top:206.4px;width:105px;height:17.8px"></div>
<div class="t abs" style="left:379px;top:232.4px">Animation Graphic:</div>
<div class="abs field" style="left:379px;top:245.8px;width:104.4px;height:17.2px;background:#f4f3ef"></div>
<div class="abs" style="left:382px;top:248.2px;width:87.4px;height:12.7px;background:#0a246a;outline:0.8px dotted #8a8470;outline-offset:-0.8px"></div>
<div class="abs sbtn" style="left:470.2px;top:247.6px;width:12.4px;height:13.6px"></div><div class="abs" style="left:473.4px;top:253.6px;width:6px;height:1.4px;background:repeating-linear-gradient(90deg,#000 0 1.4px,transparent 1.4px 2.3px)"></div>
<div class="t abs" style="left:379px;top:271.2px">Position:</div><div class="t abs" style="left:436.6px;top:271.2px">Frames:</div>
<div class="abs field" style="left:379px;top:284.2px;width:46.8px;height:15.8px"></div><div class="t abs" style="left:382px;top:286.8px">Middle</div>
<div class="abs sbtn" style="left:412.8px;top:285.9px;width:11.4px;height:12.3px"></div><svg class="abs" style="left:415.4px;top:290.4px" width="6" height="4" viewBox="0 0 6 4"><path d="M0 0.400L3 3.600L6 0.400Z" fill="#000"/></svg>
<div class="abs field" style="left:436.6px;top:284.2px;width:47px;height:16.6px"></div><div class="t abs" style="left:440.2px;top:287.2px">1</div>
<div class="abs sbtn" style="left:470.4px;top:285.9px;width:11.8px;height:13.4px"></div><div class="abs" style="left:473.4px;top:292.4px;width:6px;height:1.4px;background:repeating-linear-gradient(90deg,#000 0 1.4px,transparent 1.4px 2.3px)"></div>
<div class="t abs" style="left:494px;top:194px">SE and Flash Timing:</div>
<div class="abs field" style="left:494.6px;top:206.6px;width:277.6px;height:95px"></div>
<div class="abs" style="left:496.4px;top:208.4px;width:274px;height:12px;background:#d4d0c8;border-bottom:1px solid #808080"></div>
<div class="abs" style="left:496.4px;top:208.4px;width:30.0px;height:12px;border-right:1px solid #808080;border-left:1px solid #fff;font-size:8.8px;line-height:12px;padding-left:4px;letter-spacing:-0.12px">Frm</div>
<div class="abs" style="left:526.4px;top:208.4px;width:64.4px;height:12px;border-right:1px solid #808080;border-left:1px solid #fff;font-size:8.8px;line-height:12px;padding-left:4px;letter-spacing:-0.12px">SE</div>
<div class="abs" style="left:590.8px;top:208.4px;width:135.7px;height:12px;border-right:1px solid #808080;border-left:1px solid #fff;font-size:8.8px;line-height:12px;padding-left:4px;letter-spacing:-0.12px">Flash</div>
<div class="abs" style="left:726.5px;top:208.4px;width:31.3px;height:12px;border-right:1px solid #808080;border-left:1px solid #fff;font-size:8.8px;line-height:12px;padding-left:4px;letter-spacing:-0.12px">Cnd</div>
<div class="abs" style="left:534.4px;top:247.8px;font-size:12.7px;line-height:15px;color:#e8402c;white-space:nowrap">ANIMATION TEMPLATE!!!!</div>
<div class="abs b" style="left:379.3px;top:313.2px;width:43.2px;height:17px;line-height:14.6px">Back</div>
<div class="abs field" style="left:380px;top:333.6px;width:41.4px;height:147.8px"></div>
<div class="abs" style="left:381.6px;top:335.2px;width:26.4px;height:10.4px;background:#0a246a;color:#fff;font-size:8.8px;line-height:10.4px;letter-spacing:-0.12px;padding-left:0.6px">#001</div>
<div class="abs sbtrack" style="left:408px;top:335.2px;width:12px;height:144.8px"></div>
<div class="abs sbtn" style="left:408px;top:335.2px;width:12px;height:11.8px"></div><svg class="abs" style="left:411px;top:339.2px" width="6" height="4" viewBox="0 0 6 4"><path d="M0 3.600L3 0.400L6 3.600Z" fill="#8a8a8a"/></svg>
<div class="abs sbtn" style="left:408px;top:468.4px;width:12px;height:11.6px"></div><svg class="abs" style="left:411px;top:472.6px" width="6" height="4" viewBox="0 0 6 4"><path d="M0 0.400L3 3.600L6 0.400Z" fill="#8a8a8a"/></svg>
<div class="abs b" style="left:379.3px;top:485.2px;width:43.2px;height:17px;line-height:14.6px">Next</div>
<svg class="abs" style="left:430.6px;top:313.2px" width="262.8" height="187" viewBox="430.6 313.200 262.800 187">
<rect x="430.6" y="313.2" width="262.8" height="187" fill="#000"/>
<rect x="434.4" y="343.4" width="256.6" height="128" fill="none" stroke="#0e6a0e" stroke-width="0.9"/><path d="M562.7 343.4V471.400M434.400 407.400H691" stroke="#0e6a0e" stroke-width="0.9"/>
<g>
<path d="M541.600 375.200l1.500 0.200 11 26.200-2.200 1z" fill="#c4cce0"/><path d="M542.400 376l10.800 25.800-1 0.500z" fill="#eef2fc"/>
<path d="M551.200 402.400l5.200-2.600 1.200 2.400-1.600 4.200-3.600 0.800z" fill="#a8a8b0"/><circle cx="555.200" cy="404.600" r="1.900" fill="#e8c0a0"/>
<path d="M562.600 388.600q3-2 6.600-1.400 4.600 1 5.600 4.600l0.600 7.400-2 7.800-9.600 1.600-6.800-2.600 1.800-8.400z" fill="#7c5232"/>
<path d="M560.800 392.400l-4.600 9.600 2.200 2 4.600-7.600z" fill="#8c6040"/>
<path d="M563.400 388.400l3.200 2.800 3-2.600-0.400 3.400-2.600 1.400-2.600-1.600z" fill="#d8b060"/>
<path d="M557.800 407.400l8.400-1.400 5.800 1.800-1 8.400-2.400 5.400-3.600 0.400-1.400-5.600-3 3.800-3.400-3.800z" fill="#e4b896"/>
<path d="M561.400 420.800l4.400-3.200 2.200 4.800 3.200-1.200 1.400 6.200-3.600 3-3.600-3.200-2.800 1.600z" fill="#7c5232"/>
<path d="M559 427.400l3.600-2 2.800 1.800-0.600 3.600-4.400 1z" fill="#7e8aa0"/>
<path d="M568.600 429.600l4.800-1.400 2.400 4-1.800 5.800-4.600 3-3.200-1.200 3-4.400z" fill="#8090aa"/><path d="M567 438.400l3-3.400 1.400 1.600-2.400 3.800z" fill="#7c5232"/>
<ellipse cx="576.400" cy="405" rx="7.800" ry="10.500" fill="#c89858"/><ellipse cx="576.600" cy="405" rx="6.600" ry="9.300" fill="#d84c2c"/>
<path d="M571.600 401q2-5 6-5.600 3.600 0.600 4.600 4.400-2.600 3-6 3.200-3 0.400-4.600-2z" fill="#ec8c4c"/><ellipse cx="580.400" cy="404.400" rx="2.200" ry="3" fill="#f0c070"/><path d="M571.400 408q4 2.400 9.600 0.600-0.800 4.400-4.400 5.600-3.800-0.800-5.200-6.200z" fill="#b83c28"/>
<ellipse cx="566.900" cy="384.400" rx="4.400" ry="4.200" fill="#f2cca6"/>
<path d="M558.200 379.600q1.400-4.600 7.400-4.800 6.200 0 8 4.600l0.400 3.600-2.400-0.600-1.400-2.600-4.400 0.800-3.800-0.400-1.200 3.600-2.200-0.800z" fill="#e8801c"/><path d="M560 377.400q3-2.400 6.600-1.800l-2 2.400-3 1.600zM568.600 376.200q3 0.600 4.400 3l-3 0.200z" fill="#f4b030"/>
<path d="M573.600 382.200q1.400 2.400 0.600 5.400l1.800-0.400 1.200-2.400 4.600-1.200-0.400 1.600-3.400 1.400-1.200 2.400-3.600 0.600z" fill="#a8482c"/>
<rect x="564.400" y="383.800" width="1.500" height="1.900" fill="#3858b8"/><rect x="568.400" y="383.800" width="1.500" height="1.900" fill="#3858b8"/>
<path d="M562.700 375v66" stroke="#0e6a0e" stroke-width="0.700" opacity="0.600"/><path d="M550 407.400h32" stroke="#0e6a0e" stroke-width="0.700" opacity="0.600"/>
</g>

</svg>
<div class="abs b" style="left:701.6px;top:313.2px;width:71px;height:17px;line-height:14.6px">[ED] Battler...</div>
<div class="abs b" style="left:701.6px;top:344.6px;width:71px;height:16.6px;line-height:14.2px">Paste Last</div>
<div class="abs b" style="left:701.6px;top:363px;width:71px;height:16.8px;line-height:14.4px">Copy Frames...</div>
<div class="abs b" style="left:701.6px;top:381.4px;width:71px;height:16.4px;line-height:14.0px">Clear Frames...</div>
<div class="abs b" style="left:701.6px;top:399.2px;width:71px;height:16.6px;line-height:14.2px">Tweening...</div>
<div class="abs b" style="left:701.6px;top:417.4px;width:71px;height:16.8px;line-height:14.4px">Cell Batch....</div>
<div class="abs b" style="left:701.6px;top:435.6px;width:71px;height:17.2px;line-height:14.8px">Entire Slide...</div>
<div class="abs b" style="left:701.6px;top:466.6px;width:71px;height:17.2px;line-height:14.8px">Play Hit</div>
<div class="abs b" style="left:701.6px;top:485.2px;width:71px;height:17px;line-height:14.6px">Play Miss</div>
<div class="abs field" style="left:379.3px;top:508px;width:392.6px;height:100px;background:#808080"></div>
<div class="abs b" style="left:601px;top:632.8px;width:59.8px;height:17.6px;line-height:14.4px;border-color:#000;box-shadow:inset 1px 1px 0 #fff,inset -1px -1px 0 #404040,inset -2px -2px 0 #808080">OK</div>
<div class="abs b" style="left:665.5px;top:632.8px;width:59.6px;height:17.6px;line-height:15px">Cancel</div>
<div class="abs b" style="left:730.6px;top:632.8px;width:59.6px;height:17.6px;line-height:15px">Apply</div>
<!--DIALOG-END-->

<!--STATUS-TASKBAR-START-->
<!-- ================= STATUS BAR ================= -->
<div class="abs" style="left:0;top:779px;width:1024px;height:17px;background:#d4d0c8"></div>
<div class="abs" style="left:670px;top:781.4px;width:168.0px;height:13.4px;border:1px solid;border-color:#808080 #fff #fff #808080"></div>
<div class="abs" style="left:841.6px;top:781.4px;width:37.4px;height:13.4px;border:1px solid;border-color:#808080 #fff #fff #808080"></div>
<div class="abs" style="left:882px;top:781.4px;width:142.0px;height:13.4px;border:1px solid;border-color:#808080 #fff #fff #808080"></div>
<div class="abs lbl" style="left:672px;top:782.6px;font-size:8.8px;letter-spacing:-0.15px">001: MAP001 (20 x 15)</div>
<!-- ================= TASKBAR ================= -->
<div class="abs" style="left:0;top:796px;width:1024px;height:23px;background:#d4d0c8;border-top:1px solid #fff"></div>
<style>
.tk{top:798.4px;height:16.6px;background:#d4d0c8;border:1px solid;border-color:#fff #404040 #404040 #fff;box-shadow:inset -1px -1px 0 #808080;font-size:8.8px;line-height:14px;white-space:nowrap;letter-spacing:-0.15px;overflow:hidden}
.tk span{position:absolute;top:0.4px}
</style>
<div class="tk abs" style="left:1.2px;width:42px"><span style="left:16.4px;font-weight:bold;font-size:9.4px;letter-spacing:-0.2px">Start</span></div>
<svg class="abs" style="left:3.6px;top:800.6px" width="12" height="12" viewBox="0 0 12 12"><path d="M1 2.600q2.200-1.400 4.400-0.400v3.800q-2.200-1-4.400 0.400z" fill="#e8502c"/><path d="M6.200 2.300q2.200 1 4.600-0.300v3.800q-2.400 1.300-4.600 0.300z" fill="#58b848"/><path d="M1 7.200q2.200-1.400 4.400-0.400v3.600q-2.200-1-4.400 0.400z" fill="#3c78d8"/><path d="M6.200 6.900q2.200 1 4.600-0.300v3.600q-2.400 1.300-4.600 0.300z" fill="#f0c030"/></svg>
<div class="tk abs" style="left:47.4px;width:126.4px"><span style="left:17px">RMXP Resources - Archiv...</span></div>
<svg class="abs" style="left:50.4px;top:800.4px" width="13" height="13" viewBox="0 0 13 13"><circle cx="6.500" cy="6.500" r="5.600" fill="#e8781c"/><circle cx="6.800" cy="6" r="3.400" fill="#3c64c8"/><path d="M1.200 5q1.600-3.600 5.600-3.800-2.600 1.400-2.200 3.600 0.600 2.600 3.600 2.400 1.800-0.400 1.600-2.200 1.600 2 0.600 4.400-1.800 2.800-5 2.400-3.600-0.800-4.200-4.400z" fill="#f0a020"/><path d="M1.200 5q1.600-3.600 5.600-3.800-3.400 1.600-3 4.400z" fill="#d83c14"/></svg>
<div class="tk abs" style="left:177.6px;width:127.2px"><span style="left:17.4px">Downloads</span></div>
<svg class="abs" style="left:180.6px;top:801px" width="13" height="12" viewBox="0 0 13 12"><path d="M1 2.400q0-1.200 1.200-1.200h3l1.300 1.400h4.700q1.200 0 1.200 1.200v5.400q0 1.200-1.200 1.200h-9q-1.200 0-1.200-1.200z" fill="#e8c050" stroke="#b8902c" stroke-width="0.7"/><path d="M1.400 4.400h10.600v4.600q0 1-1 1h-8.600q-1 0-1-1z" fill="#f6dc80"/></svg>
<div class="tk abs" style="left:308.6px;width:125.6px"><span style="left:17.4px">problem part three.png (...</span></div>
<svg class="abs" style="left:311.8px;top:800.6px" width="12" height="12" viewBox="0 0 12 12"><rect x="1" y="1" width="8.600" height="10" fill="#f4f6fc" stroke="#5a78b8" stroke-width="0.8"/><path d="M2.400 8.400l2-2.600 1.600 1.600 1.400-1.400 1.400 2.400z" fill="#5a8ad8"/><path d="M6.500 6.500l4-4.600 1 1-4 4.400z" fill="#c84838"/></svg>
<div class="tk abs" style="left:438.6px;width:126.8px;background:#f4f2ee;border-color:#404040 #fff #fff #404040;box-shadow:inset 1px 1px 0 #808080"><span style="left:18.6px;top:1px;font-weight:bold;font-size:9.2px;letter-spacing:-0.1px">random - RPG Maker ...</span></div>
<div class="abs" style="left:442.2px;top:801px;width:11.4px;height:11.4px;background:radial-gradient(circle at 45% 50%,#f6c040 0,#e07018 35%,#8a2c0a 70%,#3a1404 100%);border-radius:1px"></div>
<div class="abs" style="left:941.2px;top:799px;width:2px;height:16px;border-left:1px solid #808080;border-right:1px solid #fff"></div>
<div class="abs" style="left:946.6px;top:799px;width:75.2px;height:16px;border:1px solid;border-color:#808080 #fff #fff #808080"></div>
<svg class="abs" style="left:924.6px;top:801px" width="12" height="12" viewBox="0 0 12 12"><path d="M1.400 1h9.200v8.400h-3.800l-2.400 2v-2h-3z" fill="#fcf4c0" stroke="#202020" stroke-width="0.9"/><text x="6" y="8" font-family="Liberation Sans, sans-serif" font-size="7.500" font-weight="bold" text-anchor="middle" fill="#202020">?</text></svg>
<div class="abs lbl" style="left:950.4px;top:801.4px;font-weight:bold;font-size:8.6px;letter-spacing:-0.6px">«</div>
<svg class="abs" style="left:960.6px;top:800.6px" width="12" height="12" viewBox="0 0 12 12"><circle cx="5.600" cy="5.800" r="4.600" fill="#9a9aa0" stroke="#505058" stroke-width="0.9"/><circle cx="5.600" cy="5.800" r="2" fill="#dcdce4"/><circle cx="8.800" cy="9.600" r="1.300" fill="#6a7ad8"/></svg>
<div class="abs lbl" style="left:979px;top:802px;font-size:8.8px;letter-spacing:-0.1px">10:24 AM</div>
<!-- ================= RED SCRIBBLE ================= -->
<svg class="abs" style="left:0;top:0;z-index:50;pointer-events:none" width="1024" height="819" viewBox="0 0 1024 819">
<path d="M824.0 96.3C810.0 95.1 768.0 91.6 740.0 89.2C712.0 86.8 683.5 84.5 656.0 82.0C628.5 79.5 597.7 76.6 575.0 74.5C552.3 72.4 539.2 70.4 520.0 69.6C500.8 68.8 476.2 68.5 460.0 69.6C443.8 70.7 432.5 73.7 422.5 76.0C412.5 78.3 408.3 81.2 400.0 83.7C391.7 86.2 383.7 88.8 372.5 91.0C361.3 93.2 348.6 94.4 333.0 97.0C317.4 99.6 292.0 103.4 279.0 106.6C266.0 109.8 264.2 110.8 255.0 116.0C245.8 121.2 231.5 133.0 224.0 138.0C216.5 143.0 214.1 143.6 209.9 146.0C205.7 148.4 202.6 150.2 198.9 152.6C195.2 155.0 191.6 157.7 187.9 160.3C184.2 162.9 180.6 165.1 176.9 168.0C173.2 170.9 169.6 174.1 165.9 177.9C162.2 181.7 158.6 186.2 154.9 191.0C151.2 195.8 147.6 200.7 144.0 206.4C140.4 212.2 136.8 218.2 133.3 225.5C129.8 232.8 126.8 241.9 123.0 250.1C119.2 258.3 114.8 266.1 110.7 274.7C106.6 283.2 102.2 292.5 98.4 301.4C94.7 310.3 90.9 320.7 88.2 328.0C85.5 335.3 84.0 337.9 82.3 345.0C80.6 352.1 78.7 361.6 77.9 370.8C77.1 380.0 77.5 391.5 77.4 400.0C77.3 408.5 77.2 412.7 77.5 422.0C77.8 431.3 79.0 446.3 79.5 456.0C80.0 465.7 79.4 469.9 80.4 480.0C81.4 490.1 83.7 505.6 85.5 516.4C87.3 527.2 89.4 537.2 91.3 545.0C93.2 552.8 92.9 553.8 97.0 563.0C101.1 572.2 107.9 587.7 115.7 600.0C123.5 612.3 133.5 626.2 143.6 637.0C153.7 647.8 162.8 656.8 176.0 665.0C189.2 673.2 207.0 680.2 222.5 686.0C238.0 691.8 256.1 696.7 269.0 700.0C281.9 703.3 289.3 703.2 300.0 705.6C310.7 708.0 318.7 711.2 333.0 714.5C347.3 717.8 371.3 722.7 386.0 725.5C400.7 728.3 408.8 730.2 421.0 731.5C433.2 732.8 440.5 732.3 459.0 733.5C477.5 734.7 513.7 737.5 532.0 738.8C550.3 740.0 554.3 740.6 569.0 741.0C583.7 741.4 603.3 741.3 620.0 741.0C636.7 740.7 654.1 740.3 669.4 739.0C684.7 737.7 698.2 736.7 712.0 733.0C725.8 729.3 739.8 722.1 752.0 717.0C764.2 711.9 774.0 706.9 785.0 702.6C796.0 698.3 808.7 695.4 818.0 691.0C827.3 686.6 834.5 683.7 841.0 676.0C847.5 668.3 853.7 653.0 857.0 645.0C860.3 637.0 861.4 634.1 860.6 628.0C859.8 621.9 853.9 616.3 852.0 608.6C850.1 600.9 849.5 600.1 849.0 582.0C848.5 563.9 848.8 522.6 848.7 500.0C848.7 477.4 848.5 464.4 848.7 446.5C848.9 428.6 849.2 411.1 850.0 392.5C850.8 373.9 852.1 354.1 853.4 335.0C854.7 315.9 857.0 292.2 858.0 278.0C859.0 263.8 859.8 260.5 859.5 250.0C859.2 239.5 857.6 224.6 856.0 215.0C854.4 205.4 852.7 199.6 850.0 192.5C847.3 185.4 845.0 180.0 840.0 172.5C835.0 165.0 827.1 157.1 820.0 147.5C812.9 137.9 802.5 122.9 797.5 115.0C792.5 107.1 792.1 104.0 790.0 100.0C787.9 96.0 788.3 94.0 785.0 91.3C781.7 88.6 774.7 85.8 770.0 83.8C765.3 81.8 759.2 80.2 757.0 79.5" fill="none" stroke="#ff1408" stroke-width="3" stroke-linecap="round" stroke-linejoin="round"/>
</svg>
<!--STATUS-TASKBAR-END-->



</div>
</body>
</html>
